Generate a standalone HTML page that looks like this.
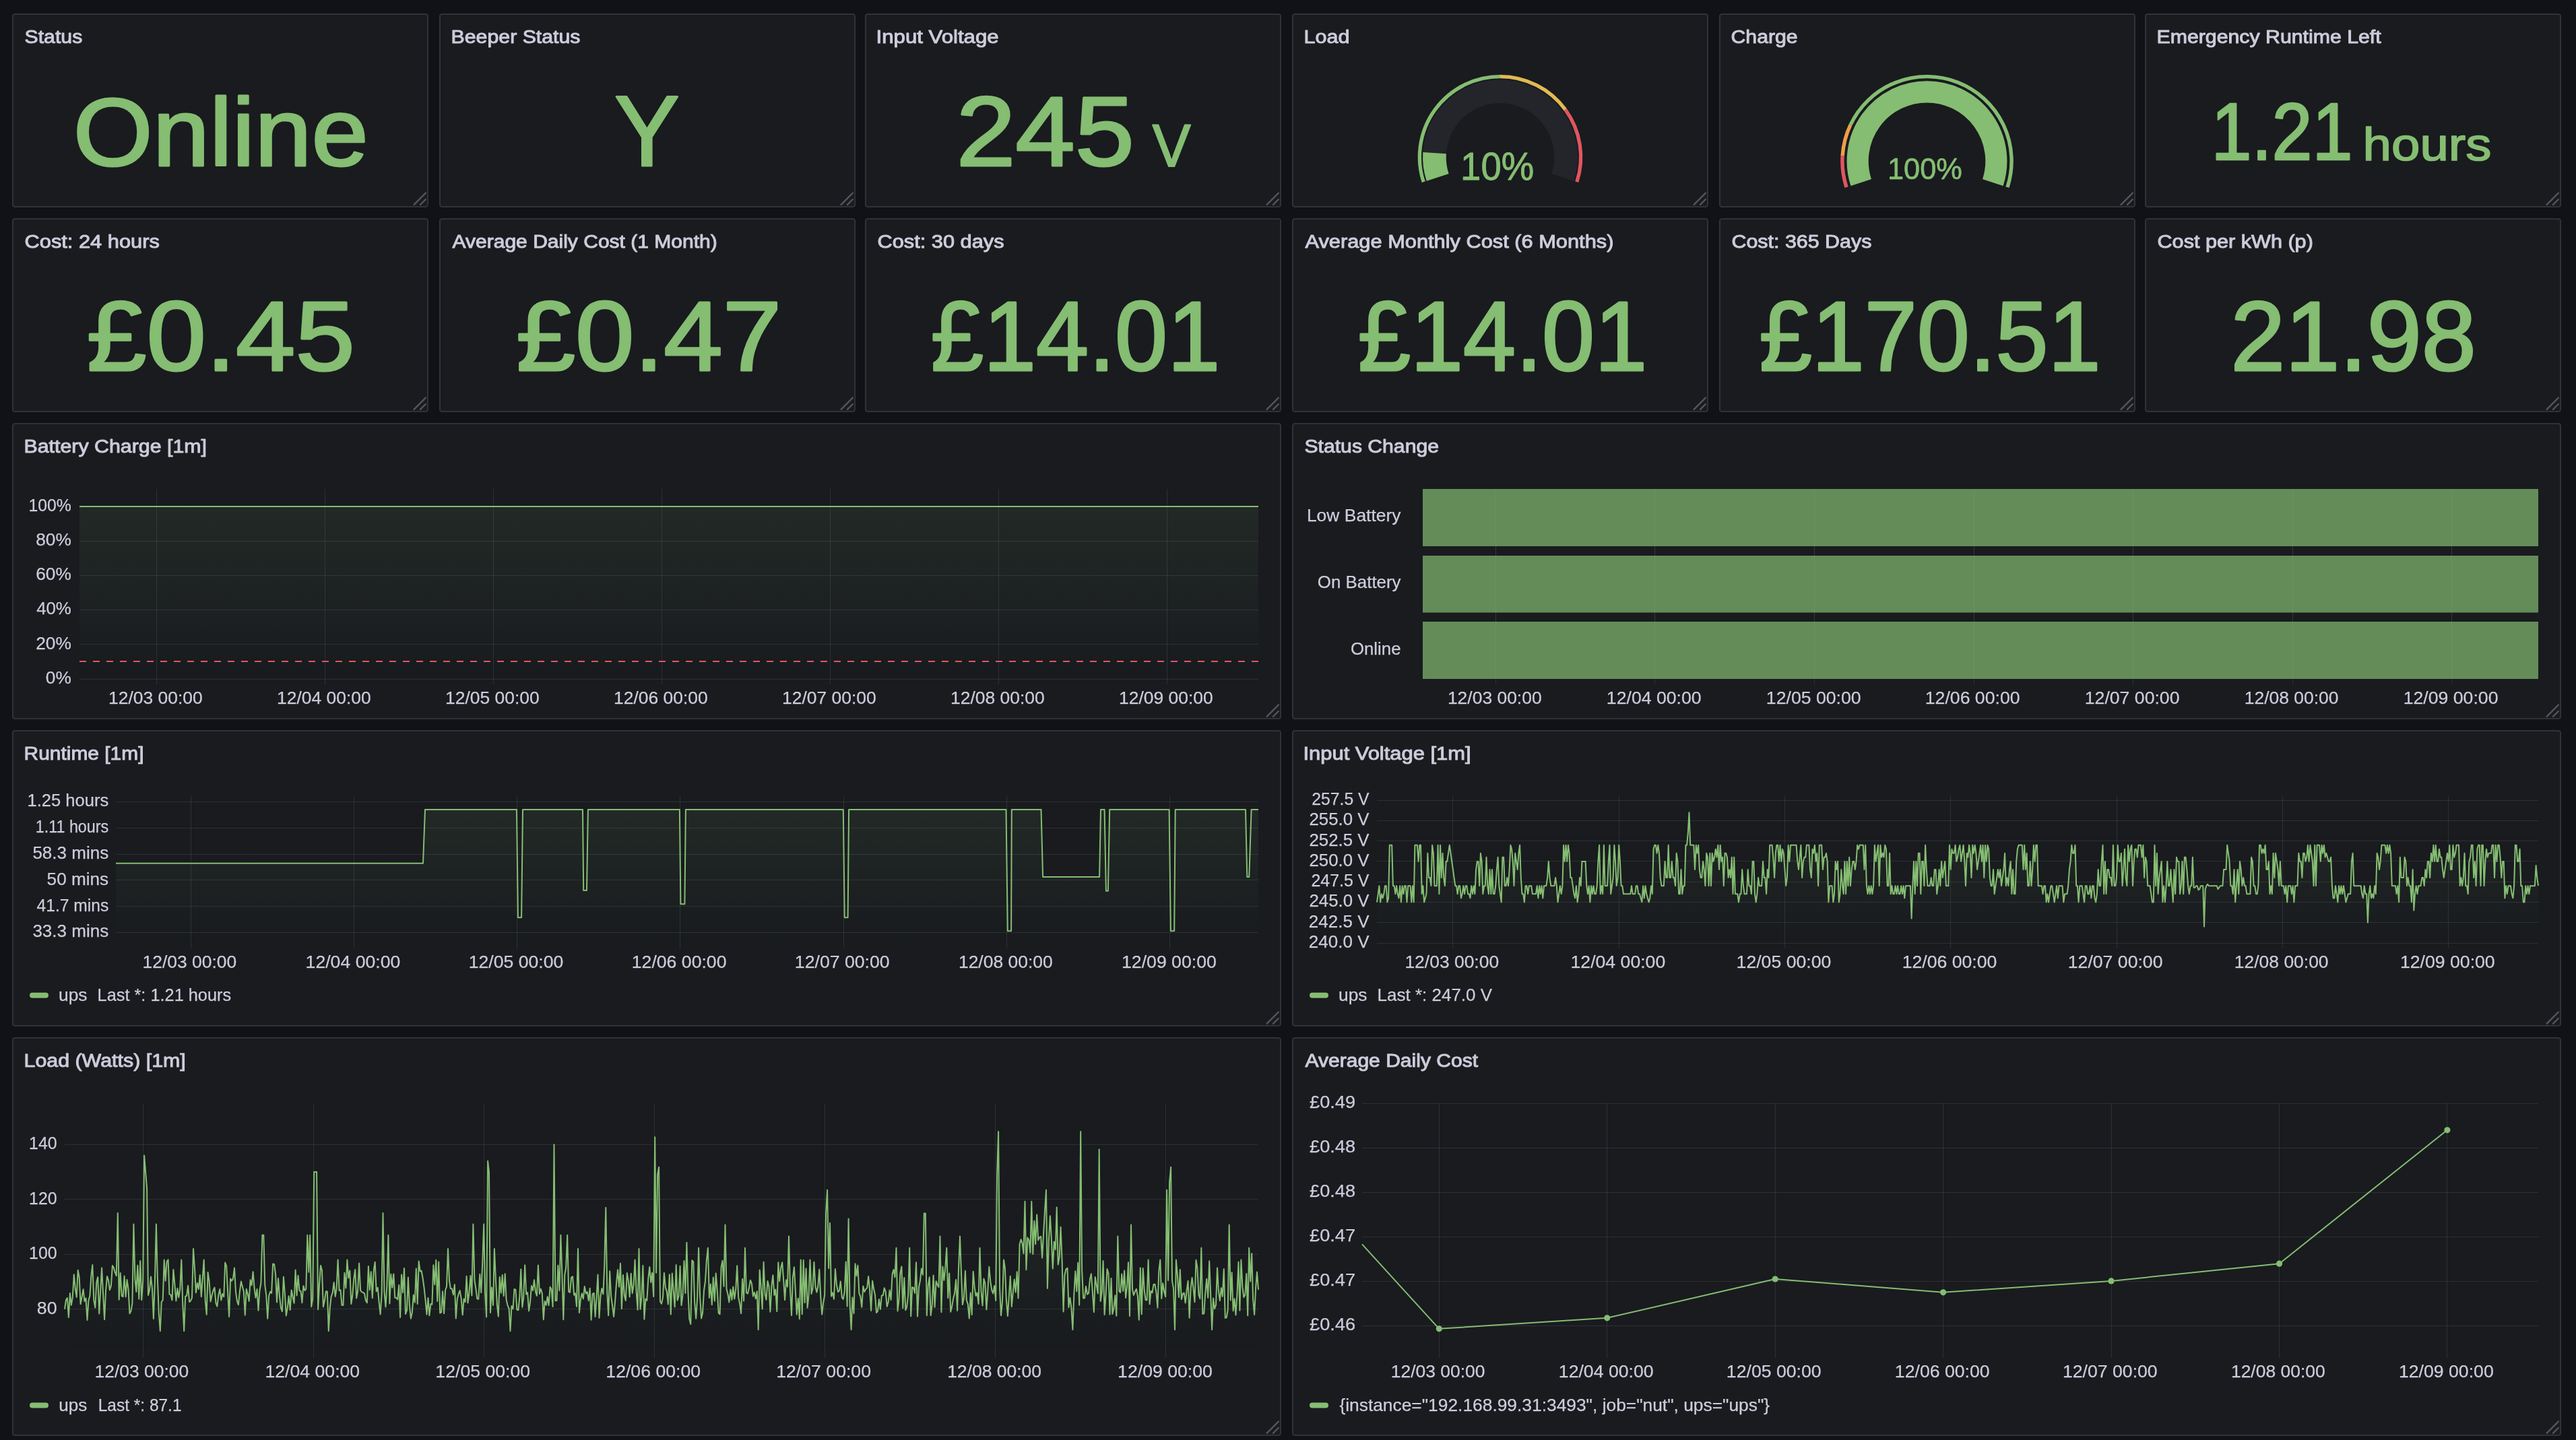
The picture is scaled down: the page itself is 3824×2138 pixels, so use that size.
<!DOCTYPE html><html lang="en"><head><meta charset="utf-8"><title>UPS Dashboard</title><style>
html,body{margin:0;padding:0}
html{background:#111217}
body{width:3824px;height:2138px;background:#111217;position:relative;font-family:"Liberation Sans", sans-serif;color:#ccccdb}
.panel{position:absolute;box-sizing:border-box;background:#191b1f;border-radius:4px;overflow:hidden}
.panel::after{content:"";position:absolute;inset:0;border:2px solid #313238;border-radius:4px;pointer-events:none}
.panel svg{position:absolute;left:0;top:0;display:block;will-change:transform}
svg text{font-family:"Liberation Sans", sans-serif;paint-order:stroke fill}
</style></head><body><main>
<section class="panel " style="left:18px;top:20px;width:618px;height:288px"><svg width="618" height="288" viewBox="18 20 618 288"><text x="36.51" y="63.90" font-size="28.2" fill="#ccccdb" stroke="#ccccdb" stroke-width="1.0" stroke-linejoin="round" textLength="85.79" lengthAdjust="spacingAndGlyphs">Status</text><text x="108.79" y="246.40" font-size="142.5" fill="#85bd72" stroke="#85bd72" stroke-width="3.2" stroke-linejoin="round" textLength="437.99" lengthAdjust="spacingAndGlyphs">Online</text><path d="M614.6 303.8L631.8 286.6M624.0 303.8L631.8 296.0" stroke="#53555b" stroke-width="2.4" stroke-linecap="round" fill="none"/></svg></section>
<section class="panel " style="left:652px;top:20px;width:618px;height:288px"><svg width="618" height="288" viewBox="652 20 618 288"><text x="669.55" y="63.90" font-size="28.2" fill="#ccccdb" stroke="#ccccdb" stroke-width="1.0" stroke-linejoin="round" textLength="191.95" lengthAdjust="spacingAndGlyphs">Beeper Status</text><text x="911.91" y="246.40" font-size="147.5" fill="#85bd72" stroke="#85bd72" stroke-width="3.2" stroke-linejoin="round" textLength="96.74" lengthAdjust="spacingAndGlyphs">Y</text><path d="M1248.6 303.8L1265.8 286.6M1258.0 303.8L1265.8 296.0" stroke="#53555b" stroke-width="2.4" stroke-linecap="round" fill="none"/></svg></section>
<section class="panel " style="left:1284px;top:20px;width:618px;height:288px"><svg width="618" height="288" viewBox="1284 20 618 288"><text x="1300.56" y="63.90" font-size="28.2" fill="#ccccdb" stroke="#ccccdb" stroke-width="1.0" stroke-linejoin="round" textLength="182.10" lengthAdjust="spacingAndGlyphs">Input Voltage</text><text x="1419.46" y="246.40" font-size="147" fill="#85bd72" stroke="#85bd72" stroke-width="3.2" stroke-linejoin="round" textLength="264.34" lengthAdjust="spacingAndGlyphs">245</text><text x="1710.77" y="247.00" font-size="89" fill="#85bd72" stroke="#85bd72" stroke-width="2.0" stroke-linejoin="round" textLength="56.84" lengthAdjust="spacingAndGlyphs">V</text><path d="M1880.6 303.8L1897.8 286.6M1890.0 303.8L1897.8 296.0" stroke="#53555b" stroke-width="2.4" stroke-linecap="round" fill="none"/></svg></section>
<section class="panel " style="left:1918px;top:20px;width:618px;height:288px"><svg width="618" height="288" viewBox="1918 20 618 288"><text x="1935.52" y="63.90" font-size="28.2" fill="#ccccdb" stroke="#ccccdb" stroke-width="1.0" stroke-linejoin="round" textLength="67.95" lengthAdjust="spacingAndGlyphs">Load</text><path d="M2134.18 263.36A97.60 97.60 0 1 1 2319.82 263.36" stroke="#23252a" stroke-width="34.6" fill="none"/><path d="M2134.18 263.36A97.60 97.60 0 0 1 2129.59 227.07" stroke="#85bd72" stroke-width="34.6" fill="none"/><path d="M2113.21 270.17A119.65 119.65 0 0 1 2227.00 113.55" stroke="#85bd72" stroke-width="5.3" fill="none"/><path d="M2227.00 113.55A119.65 119.65 0 0 1 2323.80 162.87" stroke="#e2ba53" stroke-width="5.3" fill="none"/><path d="M2323.80 162.87A119.65 119.65 0 0 1 2340.79 270.17" stroke="#e05660" stroke-width="5.3" fill="none"/><text x="2168.12" y="267.35" font-size="57.5" fill="#85bd72" stroke="#85bd72" stroke-width="0.9" stroke-linejoin="round" textLength="109.06" lengthAdjust="spacingAndGlyphs">10%</text><path d="M2514.6 303.8L2531.8 286.6M2524.0 303.8L2531.8 296.0" stroke="#53555b" stroke-width="2.4" stroke-linecap="round" fill="none"/></svg></section>
<section class="panel " style="left:2552px;top:20px;width:618px;height:288px"><svg width="618" height="288" viewBox="2552 20 618 288"><text x="2569.55" y="63.90" font-size="28.2" fill="#ccccdb" stroke="#ccccdb" stroke-width="1.0" stroke-linejoin="round" textLength="99.08" lengthAdjust="spacingAndGlyphs">Charge</text><path d="M2762.68 270.98A102.85 102.85 0 1 1 2958.32 270.98" stroke="#23252a" stroke-width="32.1" fill="none"/><path d="M2762.68 270.98A102.85 102.85 0 1 1 2958.32 270.98" stroke="#85bd72" stroke-width="32.1" fill="none"/><path d="M2741.05 278.01A125.60 125.60 0 0 1 2735.15 231.31" stroke="#e05660" stroke-width="5.4" fill="none"/><path d="M2735.15 231.31A125.60 125.60 0 0 1 2746.85 185.72" stroke="#f19d49" stroke-width="5.4" fill="none"/><path d="M2746.85 185.72A125.60 125.60 0 0 1 2979.95 278.01" stroke="#85bd72" stroke-width="5.4" fill="none"/><text x="2801.97" y="266.05" font-size="44.5" fill="#85bd72" stroke="#85bd72" stroke-width="0.7" stroke-linejoin="round" textLength="110.98" lengthAdjust="spacingAndGlyphs">100%</text><path d="M3148.6 303.8L3165.8 286.6M3158.0 303.8L3165.8 296.0" stroke="#53555b" stroke-width="2.4" stroke-linecap="round" fill="none"/></svg></section>
<section class="panel " style="left:3184px;top:20px;width:618px;height:288px"><svg width="618" height="288" viewBox="3184 20 618 288"><text x="3201.51" y="63.90" font-size="28.2" fill="#ccccdb" stroke="#ccccdb" stroke-width="1.0" stroke-linejoin="round" textLength="333.20" lengthAdjust="spacingAndGlyphs">Emergency Runtime Left</text><text x="3282.48" y="237.05" font-size="120" fill="#85bd72" stroke="#85bd72" stroke-width="2.7" stroke-linejoin="round" textLength="210.00" lengthAdjust="spacingAndGlyphs">1.21</text><text x="3507.61" y="237.55" font-size="68.7" fill="#85bd72" stroke="#85bd72" stroke-width="1.7" stroke-linejoin="round" textLength="190.81" lengthAdjust="spacingAndGlyphs">hours</text><path d="M3780.6 303.8L3797.8 286.6M3790.0 303.8L3797.8 296.0" stroke="#53555b" stroke-width="2.4" stroke-linecap="round" fill="none"/></svg></section>
<section class="panel " style="left:18px;top:324px;width:618px;height:288px"><svg width="618" height="288" viewBox="18 324 618 288"><text x="36.50" y="367.90" font-size="28.2" fill="#ccccdb" stroke="#ccccdb" stroke-width="1.0" stroke-linejoin="round" textLength="200.40" lengthAdjust="spacingAndGlyphs">Cost: 24 hours</text><text x="129.05" y="550.20" font-size="147" fill="#85bd72" stroke="#85bd72" stroke-width="3.2" stroke-linejoin="round" textLength="397.82" lengthAdjust="spacingAndGlyphs">£0.45</text><path d="M614.6 607.8L631.8 590.6M624.0 607.8L631.8 600.0" stroke="#53555b" stroke-width="2.4" stroke-linecap="round" fill="none"/></svg></section>
<section class="panel " style="left:652px;top:324px;width:618px;height:288px"><svg width="618" height="288" viewBox="652 324 618 288"><text x="671.50" y="367.90" font-size="28.2" fill="#ccccdb" stroke="#ccccdb" stroke-width="1.0" stroke-linejoin="round" textLength="393.30" lengthAdjust="spacingAndGlyphs">Average Daily Cost (1 Month)</text><text x="766.63" y="550.20" font-size="147" fill="#85bd72" stroke="#85bd72" stroke-width="3.2" stroke-linejoin="round" textLength="393.70" lengthAdjust="spacingAndGlyphs">£0.47</text><path d="M1248.6 607.8L1265.8 590.6M1258.0 607.8L1265.8 600.0" stroke="#53555b" stroke-width="2.4" stroke-linecap="round" fill="none"/></svg></section>
<section class="panel " style="left:1284px;top:324px;width:618px;height:288px"><svg width="618" height="288" viewBox="1284 324 618 288"><text x="1302.51" y="367.90" font-size="28.2" fill="#ccccdb" stroke="#ccccdb" stroke-width="1.0" stroke-linejoin="round" textLength="188.08" lengthAdjust="spacingAndGlyphs">Cost: 30 days</text><text x="1382.08" y="550.20" font-size="147" fill="#85bd72" stroke="#85bd72" stroke-width="3.2" stroke-linejoin="round" textLength="429.10" lengthAdjust="spacingAndGlyphs">£14.01</text><path d="M1880.6 607.8L1897.8 590.6M1890.0 607.8L1897.8 600.0" stroke="#53555b" stroke-width="2.4" stroke-linecap="round" fill="none"/></svg></section>
<section class="panel " style="left:1918px;top:324px;width:618px;height:288px"><svg width="618" height="288" viewBox="1918 324 618 288"><text x="1937.50" y="367.90" font-size="28.2" fill="#ccccdb" stroke="#ccccdb" stroke-width="1.0" stroke-linejoin="round" textLength="457.90" lengthAdjust="spacingAndGlyphs">Average Monthly Cost (6 Months)</text><text x="2016.08" y="550.20" font-size="147" fill="#85bd72" stroke="#85bd72" stroke-width="3.2" stroke-linejoin="round" textLength="429.10" lengthAdjust="spacingAndGlyphs">£14.01</text><path d="M2514.6 607.8L2531.8 590.6M2524.0 607.8L2531.8 600.0" stroke="#53555b" stroke-width="2.4" stroke-linecap="round" fill="none"/></svg></section>
<section class="panel " style="left:2552px;top:324px;width:618px;height:288px"><svg width="618" height="288" viewBox="2552 324 618 288"><text x="2570.51" y="367.90" font-size="28.2" fill="#ccccdb" stroke="#ccccdb" stroke-width="1.0" stroke-linejoin="round" textLength="207.89" lengthAdjust="spacingAndGlyphs">Cost: 365 Days</text><text x="2611.69" y="550.20" font-size="147" fill="#85bd72" stroke="#85bd72" stroke-width="3.2" stroke-linejoin="round" textLength="506.88" lengthAdjust="spacingAndGlyphs">£170.51</text><path d="M3148.6 607.8L3165.8 590.6M3158.0 607.8L3165.8 600.0" stroke="#53555b" stroke-width="2.4" stroke-linecap="round" fill="none"/></svg></section>
<section class="panel " style="left:3184px;top:324px;width:618px;height:288px"><svg width="618" height="288" viewBox="3184 324 618 288"><text x="3202.50" y="367.90" font-size="28.2" fill="#ccccdb" stroke="#ccccdb" stroke-width="1.0" stroke-linejoin="round" textLength="231.36" lengthAdjust="spacingAndGlyphs">Cost per kWh (p)</text><text x="3311.28" y="550.20" font-size="147" fill="#85bd72" stroke="#85bd72" stroke-width="3.2" stroke-linejoin="round" textLength="364.61" lengthAdjust="spacingAndGlyphs">21.98</text><path d="M3780.6 607.8L3797.8 590.6M3790.0 607.8L3797.8 600.0" stroke="#53555b" stroke-width="2.4" stroke-linecap="round" fill="none"/></svg></section>
<section class="panel " style="left:18px;top:628px;width:1884px;height:440px"><svg width="1884" height="440" viewBox="18 628 1884 440"><text x="35.47" y="671.90" font-size="28.2" fill="#ccccdb" stroke="#ccccdb" stroke-width="1.0" stroke-linejoin="round" textLength="271.56" lengthAdjust="spacingAndGlyphs">Battery Charge [1m]</text><defs><linearGradient id="gB" gradientUnits="userSpaceOnUse" x1="0" y1="726" x2="0" y2="1008"><stop offset="0" stop-color="#85bd72" stop-opacity="0.1"/><stop offset="1" stop-color="#85bd72" stop-opacity="0"/></linearGradient></defs><rect x="118" y="752" width="1750" height="256" fill="url(#gB)"/><rect x="232" y="726" width="1" height="290" fill="rgba(240,250,255,0.09)"/><rect x="482" y="726" width="1" height="290" fill="rgba(240,250,255,0.09)"/><rect x="732" y="726" width="1" height="290" fill="rgba(240,250,255,0.09)"/><rect x="982" y="726" width="1" height="290" fill="rgba(240,250,255,0.09)"/><rect x="1232" y="726" width="1" height="290" fill="rgba(240,250,255,0.09)"/><rect x="1482" y="726" width="1" height="290" fill="rgba(240,250,255,0.09)"/><rect x="1732" y="726" width="1" height="290" fill="rgba(240,250,255,0.09)"/><rect x="118" y="752" width="1750" height="1" fill="rgba(240,250,255,0.09)"/><rect x="118" y="803" width="1750" height="1" fill="rgba(240,250,255,0.09)"/><rect x="118" y="854" width="1750" height="1" fill="rgba(240,250,255,0.09)"/><rect x="118" y="905" width="1750" height="1" fill="rgba(240,250,255,0.09)"/><rect x="118" y="956" width="1750" height="1" fill="rgba(240,250,255,0.09)"/><rect x="118" y="1008" width="1750" height="1" fill="rgba(240,250,255,0.09)"/><rect x="118" y="751" width="1750" height="2" fill="#85bd72"/><path d="M118 982H1868" stroke="#e05660" stroke-width="2" stroke-dasharray="10 10" fill="none"/><text x="42.44" y="758.88" font-size="25" fill="#ccccdb" stroke="#ccccdb" stroke-width="0.25" stroke-linejoin="round" textLength="63.39" lengthAdjust="spacingAndGlyphs">100%</text><text x="53.24" y="810.08" font-size="25" fill="#ccccdb" stroke="#ccccdb" stroke-width="0.25" stroke-linejoin="round" textLength="52.62" lengthAdjust="spacingAndGlyphs">80%</text><text x="53.20" y="861.27" font-size="25" fill="#ccccdb" stroke="#ccccdb" stroke-width="0.25" stroke-linejoin="round" textLength="52.66" lengthAdjust="spacingAndGlyphs">60%</text><text x="54.15" y="912.48" font-size="25" fill="#ccccdb" stroke="#ccccdb" stroke-width="0.25" stroke-linejoin="round" textLength="51.71" lengthAdjust="spacingAndGlyphs">40%</text><text x="53.18" y="963.67" font-size="25" fill="#ccccdb" stroke="#ccccdb" stroke-width="0.25" stroke-linejoin="round" textLength="52.68" lengthAdjust="spacingAndGlyphs">20%</text><text x="67.79" y="1014.88" font-size="25" fill="#ccccdb" stroke="#ccccdb" stroke-width="0.25" stroke-linejoin="round" textLength="38.00" lengthAdjust="spacingAndGlyphs">0%</text><text x="161.01" y="1044.88" font-size="25" fill="#ccccdb" stroke="#ccccdb" stroke-width="0.25" stroke-linejoin="round" textLength="139.74" lengthAdjust="spacingAndGlyphs">12/03 00:00</text><text x="411.01" y="1044.88" font-size="25" fill="#ccccdb" stroke="#ccccdb" stroke-width="0.25" stroke-linejoin="round" textLength="139.74" lengthAdjust="spacingAndGlyphs">12/04 00:00</text><text x="661.01" y="1044.88" font-size="25" fill="#ccccdb" stroke="#ccccdb" stroke-width="0.25" stroke-linejoin="round" textLength="139.74" lengthAdjust="spacingAndGlyphs">12/05 00:00</text><text x="911.01" y="1044.88" font-size="25" fill="#ccccdb" stroke="#ccccdb" stroke-width="0.25" stroke-linejoin="round" textLength="139.74" lengthAdjust="spacingAndGlyphs">12/06 00:00</text><text x="1161.01" y="1044.88" font-size="25" fill="#ccccdb" stroke="#ccccdb" stroke-width="0.25" stroke-linejoin="round" textLength="139.74" lengthAdjust="spacingAndGlyphs">12/07 00:00</text><text x="1411.01" y="1044.88" font-size="25" fill="#ccccdb" stroke="#ccccdb" stroke-width="0.25" stroke-linejoin="round" textLength="139.74" lengthAdjust="spacingAndGlyphs">12/08 00:00</text><text x="1661.01" y="1044.88" font-size="25" fill="#ccccdb" stroke="#ccccdb" stroke-width="0.25" stroke-linejoin="round" textLength="139.74" lengthAdjust="spacingAndGlyphs">12/09 00:00</text><path d="M1880.6 1063.8L1897.8 1046.6M1890.0 1063.8L1897.8 1056.0" stroke="#53555b" stroke-width="2.4" stroke-linecap="round" fill="none"/></svg></section>
<section class="panel " style="left:1918px;top:628px;width:1884px;height:440px"><svg width="1884" height="440" viewBox="1918 628 1884 440"><text x="1936.50" y="671.90" font-size="28.2" fill="#ccccdb" stroke="#ccccdb" stroke-width="1.0" stroke-linejoin="round" textLength="199.44" lengthAdjust="spacingAndGlyphs">Status Change</text><rect x="2220" y="726" width="1" height="290" fill="rgba(240,250,255,0.09)"/><rect x="2456" y="726" width="1" height="290" fill="rgba(240,250,255,0.09)"/><rect x="2693" y="726" width="1" height="290" fill="rgba(240,250,255,0.09)"/><rect x="2930" y="726" width="1" height="290" fill="rgba(240,250,255,0.09)"/><rect x="3166" y="726" width="1" height="290" fill="rgba(240,250,255,0.09)"/><rect x="3403" y="726" width="1" height="290" fill="rgba(240,250,255,0.09)"/><rect x="3639" y="726" width="1" height="290" fill="rgba(240,250,255,0.09)"/><rect x="2112" y="726" width="1656" height="85" fill="#648c59"/><rect x="2112" y="825" width="1656" height="84.5" fill="#648c59"/><rect x="2112" y="923" width="1656" height="85" fill="#648c59"/><rect x="2220" y="726" width="1" height="282" fill="rgba(240,250,255,0.05)"/><rect x="2456" y="726" width="1" height="282" fill="rgba(240,250,255,0.05)"/><rect x="2693" y="726" width="1" height="282" fill="rgba(240,250,255,0.05)"/><rect x="2930" y="726" width="1" height="282" fill="rgba(240,250,255,0.05)"/><rect x="3166" y="726" width="1" height="282" fill="rgba(240,250,255,0.05)"/><rect x="3403" y="726" width="1" height="282" fill="rgba(240,250,255,0.05)"/><rect x="3639" y="726" width="1" height="282" fill="rgba(240,250,255,0.05)"/><text x="1939.92" y="774.08" font-size="25" fill="#ccccdb" stroke="#ccccdb" stroke-width="0.25" stroke-linejoin="round" textLength="139.60" lengthAdjust="spacingAndGlyphs">Low Battery</text><text x="1955.87" y="873.08" font-size="25" fill="#ccccdb" stroke="#ccccdb" stroke-width="0.25" stroke-linejoin="round" textLength="123.68" lengthAdjust="spacingAndGlyphs">On Battery</text><text x="2004.99" y="972.08" font-size="25" fill="#ccccdb" stroke="#ccccdb" stroke-width="0.25" stroke-linejoin="round" textLength="74.52" lengthAdjust="spacingAndGlyphs">Online</text><text x="2148.92" y="1044.88" font-size="25" fill="#ccccdb" stroke="#ccccdb" stroke-width="0.25" stroke-linejoin="round" textLength="139.73" lengthAdjust="spacingAndGlyphs">12/03 00:00</text><text x="2384.86" y="1044.88" font-size="25" fill="#ccccdb" stroke="#ccccdb" stroke-width="0.25" stroke-linejoin="round" textLength="140.76" lengthAdjust="spacingAndGlyphs">12/04 00:00</text><text x="2621.85" y="1044.88" font-size="25" fill="#ccccdb" stroke="#ccccdb" stroke-width="0.25" stroke-linejoin="round" textLength="140.77" lengthAdjust="spacingAndGlyphs">12/05 00:00</text><text x="2857.80" y="1044.88" font-size="25" fill="#ccccdb" stroke="#ccccdb" stroke-width="0.25" stroke-linejoin="round" textLength="140.76" lengthAdjust="spacingAndGlyphs">12/06 00:00</text><text x="3094.76" y="1044.88" font-size="25" fill="#ccccdb" stroke="#ccccdb" stroke-width="0.25" stroke-linejoin="round" textLength="140.76" lengthAdjust="spacingAndGlyphs">12/07 00:00</text><text x="3331.75" y="1044.88" font-size="25" fill="#ccccdb" stroke="#ccccdb" stroke-width="0.25" stroke-linejoin="round" textLength="139.76" lengthAdjust="spacingAndGlyphs">12/08 00:00</text><text x="3567.72" y="1044.88" font-size="25" fill="#ccccdb" stroke="#ccccdb" stroke-width="0.25" stroke-linejoin="round" textLength="140.74" lengthAdjust="spacingAndGlyphs">12/09 00:00</text><path d="M3780.6 1063.8L3797.8 1046.6M3790.0 1063.8L3797.8 1056.0" stroke="#53555b" stroke-width="2.4" stroke-linecap="round" fill="none"/></svg></section>
<section class="panel " style="left:18px;top:1084px;width:1884px;height:440px"><svg width="1884" height="440" viewBox="18 1084 1884 440"><text x="35.54" y="1127.90" font-size="28.2" fill="#ccccdb" stroke="#ccccdb" stroke-width="1.0" stroke-linejoin="round" textLength="177.98" lengthAdjust="spacingAndGlyphs">Runtime [1m]</text><defs><linearGradient id="gR" gradientUnits="userSpaceOnUse" x1="0" y1="1182" x2="0" y2="1400"><stop offset="0" stop-color="#85bd72" stop-opacity="0.1"/><stop offset="1" stop-color="#85bd72" stop-opacity="0"/></linearGradient></defs><rect x="283" y="1182" width="1" height="226" fill="rgba(240,250,255,0.09)"/><rect x="525" y="1182" width="1" height="226" fill="rgba(240,250,255,0.09)"/><rect x="767" y="1182" width="1" height="226" fill="rgba(240,250,255,0.09)"/><rect x="1009" y="1182" width="1" height="226" fill="rgba(240,250,255,0.09)"/><rect x="1252" y="1182" width="1" height="226" fill="rgba(240,250,255,0.09)"/><rect x="1494" y="1182" width="1" height="226" fill="rgba(240,250,255,0.09)"/><rect x="1736" y="1182" width="1" height="226" fill="rgba(240,250,255,0.09)"/><rect x="172" y="1190" width="1696" height="1" fill="rgba(240,250,255,0.09)"/><rect x="172" y="1229" width="1696" height="1" fill="rgba(240,250,255,0.09)"/><rect x="172" y="1268" width="1696" height="1" fill="rgba(240,250,255,0.09)"/><rect x="172" y="1306" width="1696" height="1" fill="rgba(240,250,255,0.09)"/><rect x="172" y="1345" width="1696" height="1" fill="rgba(240,250,255,0.09)"/><rect x="172" y="1384" width="1696" height="1" fill="rgba(240,250,255,0.09)"/><path d="M172.0 1281.7L628.0 1281.7L631.0 1202.0L767.0 1202.0L768.9 1362.2L774.1 1362.2L776.0 1202.0L865.0 1202.0L866.2 1322.0L871.0 1322.0L872.9 1202.0L1008.9 1202.0L1010.4 1342.3L1016.4 1342.3L1017.9 1202.0L1251.8 1202.0L1253.7 1362.2L1258.6 1362.2L1260.1 1202.0L1493.5 1202.0L1495.8 1382.2L1501.1 1382.2L1501.8 1202.0L1545.5 1202.0L1548.1 1302.0L1632.1 1302.0L1634.0 1202.0L1639.6 1202.0L1641.9 1322.7L1644.9 1322.7L1647.2 1202.0L1735.6 1202.0L1737.9 1382.2L1743.2 1382.2L1744.7 1202.0L1849.0 1202.0L1851.3 1302.0L1854.3 1302.0L1857.6 1202.0L1868.0 1202.0L1868.0 1400L172.0 1400Z" fill="url(#gR)"/><path d="M172.0 1281.7L628.0 1281.7L631.0 1202.0L767.0 1202.0L768.9 1362.2L774.1 1362.2L776.0 1202.0L865.0 1202.0L866.2 1322.0L871.0 1322.0L872.9 1202.0L1008.9 1202.0L1010.4 1342.3L1016.4 1342.3L1017.9 1202.0L1251.8 1202.0L1253.7 1362.2L1258.6 1362.2L1260.1 1202.0L1493.5 1202.0L1495.8 1382.2L1501.1 1382.2L1501.8 1202.0L1545.5 1202.0L1548.1 1302.0L1632.1 1302.0L1634.0 1202.0L1639.6 1202.0L1641.9 1322.7L1644.9 1322.7L1647.2 1202.0L1735.6 1202.0L1737.9 1382.2L1743.2 1382.2L1744.7 1202.0L1849.0 1202.0L1851.3 1302.0L1854.3 1302.0L1857.6 1202.0L1868.0 1202.0" fill="none" stroke="#85bd72" stroke-width="2" stroke-linejoin="round"/><text x="40.54" y="1197.28" font-size="25" fill="#ccccdb" stroke="#ccccdb" stroke-width="0.25" stroke-linejoin="round" textLength="120.71" lengthAdjust="spacingAndGlyphs">1.25 hours</text><text x="52.81" y="1236.08" font-size="25" fill="#ccccdb" stroke="#ccccdb" stroke-width="0.25" stroke-linejoin="round" textLength="108.39" lengthAdjust="spacingAndGlyphs">1.11 hours</text><text x="48.40" y="1274.97" font-size="25" fill="#ccccdb" stroke="#ccccdb" stroke-width="0.25" stroke-linejoin="round" textLength="112.83" lengthAdjust="spacingAndGlyphs">58.3 mins</text><text x="69.64" y="1313.78" font-size="25" fill="#ccccdb" stroke="#ccccdb" stroke-width="0.25" stroke-linejoin="round" textLength="91.57" lengthAdjust="spacingAndGlyphs">50 mins</text><text x="54.61" y="1352.67" font-size="25" fill="#ccccdb" stroke="#ccccdb" stroke-width="0.25" stroke-linejoin="round" textLength="106.60" lengthAdjust="spacingAndGlyphs">41.7 mins</text><text x="48.40" y="1391.47" font-size="25" fill="#ccccdb" stroke="#ccccdb" stroke-width="0.25" stroke-linejoin="round" textLength="112.83" lengthAdjust="spacingAndGlyphs">33.3 mins</text><text x="211.51" y="1436.88" font-size="25" fill="#ccccdb" stroke="#ccccdb" stroke-width="0.25" stroke-linejoin="round" textLength="139.73" lengthAdjust="spacingAndGlyphs">12/03 00:00</text><text x="453.59" y="1436.88" font-size="25" fill="#ccccdb" stroke="#ccccdb" stroke-width="0.25" stroke-linejoin="round" textLength="140.75" lengthAdjust="spacingAndGlyphs">12/04 00:00</text><text x="695.66" y="1436.88" font-size="25" fill="#ccccdb" stroke="#ccccdb" stroke-width="0.25" stroke-linejoin="round" textLength="140.77" lengthAdjust="spacingAndGlyphs">12/05 00:00</text><text x="937.76" y="1436.88" font-size="25" fill="#ccccdb" stroke="#ccccdb" stroke-width="0.25" stroke-linejoin="round" textLength="140.76" lengthAdjust="spacingAndGlyphs">12/06 00:00</text><text x="1179.86" y="1436.88" font-size="25" fill="#ccccdb" stroke="#ccccdb" stroke-width="0.25" stroke-linejoin="round" textLength="140.76" lengthAdjust="spacingAndGlyphs">12/07 00:00</text><text x="1422.96" y="1436.88" font-size="25" fill="#ccccdb" stroke="#ccccdb" stroke-width="0.25" stroke-linejoin="round" textLength="139.74" lengthAdjust="spacingAndGlyphs">12/08 00:00</text><text x="1665.04" y="1436.88" font-size="25" fill="#ccccdb" stroke="#ccccdb" stroke-width="0.25" stroke-linejoin="round" textLength="140.76" lengthAdjust="spacingAndGlyphs">12/09 00:00</text><rect x="44" y="1473.8" width="28" height="8" rx="4" fill="#85bd72"/><text x="87.09" y="1485.88" font-size="25" fill="#ccccdb" stroke="#ccccdb" stroke-width="0.25" stroke-linejoin="round" textLength="42.47" lengthAdjust="spacingAndGlyphs">ups</text><text x="144.62" y="1485.88" font-size="25" fill="#ccccdb" stroke="#ccccdb" stroke-width="0.25" stroke-linejoin="round" textLength="198.49" lengthAdjust="spacingAndGlyphs">Last *: 1.21 hours</text><path d="M1880.6 1519.8L1897.8 1502.6M1890.0 1519.8L1897.8 1512.0" stroke="#53555b" stroke-width="2.4" stroke-linecap="round" fill="none"/></svg></section>
<section class="panel " style="left:1918px;top:1084px;width:1884px;height:440px"><svg width="1884" height="440" viewBox="1918 1084 1884 440"><text x="1934.53" y="1127.90" font-size="28.2" fill="#ccccdb" stroke="#ccccdb" stroke-width="1.0" stroke-linejoin="round" textLength="248.98" lengthAdjust="spacingAndGlyphs">Input Voltage [1m]</text><defs><linearGradient id="gV" gradientUnits="userSpaceOnUse" x1="0" y1="1182" x2="0" y2="1400"><stop offset="0" stop-color="#85bd72" stop-opacity="0.1"/><stop offset="1" stop-color="#85bd72" stop-opacity="0"/></linearGradient></defs><rect x="2156" y="1182" width="1" height="226" fill="rgba(240,250,255,0.09)"/><rect x="2403" y="1182" width="1" height="226" fill="rgba(240,250,255,0.09)"/><rect x="2649" y="1182" width="1" height="226" fill="rgba(240,250,255,0.09)"/><rect x="2895" y="1182" width="1" height="226" fill="rgba(240,250,255,0.09)"/><rect x="3142" y="1182" width="1" height="226" fill="rgba(240,250,255,0.09)"/><rect x="3388" y="1182" width="1" height="226" fill="rgba(240,250,255,0.09)"/><rect x="3634" y="1182" width="1" height="226" fill="rgba(240,250,255,0.09)"/><rect x="2044" y="1188" width="1724" height="1" fill="rgba(240,250,255,0.09)"/><rect x="2044" y="1218" width="1724" height="1" fill="rgba(240,250,255,0.09)"/><rect x="2044" y="1248" width="1724" height="1" fill="rgba(240,250,255,0.09)"/><rect x="2044" y="1278" width="1724" height="1" fill="rgba(240,250,255,0.09)"/><rect x="2044" y="1309" width="1724" height="1" fill="rgba(240,250,255,0.09)"/><rect x="2044" y="1339" width="1724" height="1" fill="rgba(240,250,255,0.09)"/><rect x="2044" y="1369" width="1724" height="1" fill="rgba(240,250,255,0.09)"/><rect x="2044" y="1400" width="1724" height="1" fill="rgba(240,250,255,0.09)"/><path d="M2044.0 1339.5L2045.7 1327.3L2047.4 1315.2L2049.1 1339.5L2050.8 1327.3L2052.6 1333.4L2054.3 1327.3L2056.0 1315.2L2057.7 1315.2L2059.4 1339.5L2061.1 1333.4L2062.8 1254.7L2064.5 1254.7L2066.2 1254.7L2067.9 1315.2L2069.7 1315.2L2071.4 1327.3L2073.1 1315.2L2074.8 1327.3L2076.5 1333.4L2078.2 1315.2L2079.9 1339.5L2081.6 1315.2L2083.3 1327.3L2085.0 1315.2L2086.8 1315.2L2088.5 1339.5L2090.2 1315.2L2091.9 1315.2L2093.6 1315.2L2095.3 1339.5L2097.0 1315.2L2098.7 1339.5L2100.4 1254.7L2102.2 1254.7L2103.9 1254.7L2105.6 1278.9L2107.3 1254.7L2109.0 1254.7L2110.7 1327.3L2112.4 1315.2L2114.1 1339.5L2115.8 1333.4L2117.5 1327.3L2119.3 1266.8L2121.0 1303.1L2122.7 1303.1L2124.4 1315.2L2126.1 1254.7L2127.8 1266.8L2129.5 1315.2L2131.2 1315.2L2132.9 1315.2L2134.6 1254.7L2136.4 1327.3L2138.1 1254.7L2139.8 1303.1L2141.5 1266.8L2143.2 1303.1L2144.9 1315.2L2146.6 1278.9L2148.3 1278.9L2150.0 1266.8L2151.8 1254.7L2153.5 1266.8L2155.2 1278.9L2156.9 1291.0L2158.6 1303.1L2160.3 1315.2L2162.0 1315.2L2163.7 1327.3L2165.4 1315.2L2167.1 1315.2L2168.9 1333.4L2170.6 1327.3L2172.3 1315.2L2174.0 1327.3L2175.7 1315.2L2177.4 1315.2L2179.1 1327.3L2180.8 1327.3L2182.5 1333.4L2184.2 1315.2L2186.0 1327.3L2187.7 1315.2L2189.4 1327.3L2191.1 1291.0L2192.8 1278.9L2194.5 1278.9L2196.2 1315.2L2197.9 1266.8L2199.6 1278.9L2201.3 1327.3L2203.1 1315.2L2204.8 1315.2L2206.5 1272.8L2208.2 1315.2L2209.9 1327.3L2211.6 1291.0L2213.3 1327.3L2215.0 1291.0L2216.7 1327.3L2218.5 1327.3L2220.2 1315.2L2221.9 1291.0L2223.6 1272.8L2225.3 1315.2L2227.0 1327.3L2228.7 1339.5L2230.4 1272.8L2232.1 1272.8L2233.8 1315.2L2235.6 1315.2L2237.3 1303.1L2239.0 1315.2L2240.7 1291.0L2242.4 1254.7L2244.1 1260.7L2245.8 1278.9L2247.5 1315.2L2249.2 1266.8L2250.9 1278.9L2252.7 1291.0L2254.4 1266.8L2256.1 1254.7L2257.8 1303.1L2259.5 1327.3L2261.2 1327.3L2262.9 1339.5L2264.6 1315.2L2266.3 1315.2L2268.1 1327.3L2269.8 1315.2L2271.5 1315.2L2273.2 1315.2L2274.9 1327.3L2276.6 1327.3L2278.3 1327.3L2280.0 1327.3L2281.7 1315.2L2283.4 1333.4L2285.2 1315.2L2286.9 1327.3L2288.6 1315.2L2290.3 1333.4L2292.0 1315.2L2293.7 1315.2L2295.4 1315.2L2297.1 1303.1L2298.8 1278.9L2300.5 1303.1L2302.3 1315.2L2304.0 1315.2L2305.7 1315.2L2307.4 1315.2L2309.1 1303.1L2310.8 1315.2L2312.5 1339.5L2314.2 1327.3L2315.9 1315.2L2317.7 1327.3L2319.4 1315.2L2321.1 1254.7L2322.8 1278.9L2324.5 1254.7L2326.2 1278.9L2327.9 1254.7L2329.6 1266.8L2331.3 1303.1L2333.0 1303.1L2334.8 1315.2L2336.5 1327.3L2338.2 1333.4L2339.9 1315.2L2341.6 1339.5L2343.3 1327.3L2345.0 1303.1L2346.7 1315.2L2348.4 1278.9L2350.1 1278.9L2351.9 1278.9L2353.6 1278.9L2355.3 1315.2L2357.0 1327.3L2358.7 1315.2L2360.4 1339.5L2362.1 1315.2L2363.8 1327.3L2365.5 1315.2L2367.2 1327.3L2369.0 1327.3L2370.7 1315.2L2372.4 1278.9L2374.1 1254.7L2375.8 1327.3L2377.5 1315.2L2379.2 1327.3L2380.9 1254.7L2382.6 1315.2L2384.4 1315.2L2386.1 1315.2L2387.8 1278.9L2389.5 1254.7L2391.2 1327.3L2392.9 1315.2L2394.6 1303.1L2396.3 1254.7L2398.0 1278.9L2399.7 1315.2L2401.5 1303.1L2403.2 1254.7L2404.9 1278.9L2406.6 1315.2L2408.3 1315.2L2410.0 1327.3L2411.7 1327.3L2413.4 1327.3L2415.1 1327.3L2416.8 1327.3L2418.6 1327.3L2420.3 1327.3L2422.0 1315.2L2423.7 1327.3L2425.4 1327.3L2427.1 1327.3L2428.8 1315.2L2430.5 1315.2L2432.2 1327.3L2434.0 1327.3L2435.7 1333.4L2437.4 1339.5L2439.1 1315.2L2440.8 1333.4L2442.5 1315.2L2444.2 1327.3L2445.9 1333.4L2447.6 1339.5L2449.3 1333.4L2451.1 1315.2L2452.8 1327.3L2454.5 1260.7L2456.2 1254.7L2457.9 1254.7L2459.6 1266.8L2461.3 1254.7L2463.0 1266.8L2464.7 1303.1L2466.4 1315.2L2468.2 1315.2L2469.9 1315.2L2471.6 1278.9L2473.3 1303.1L2475.0 1303.1L2476.7 1254.7L2478.4 1303.1L2480.1 1303.1L2481.8 1278.9L2483.6 1303.1L2485.3 1303.1L2487.0 1315.2L2488.7 1266.8L2490.4 1278.9L2492.1 1327.3L2493.8 1327.3L2495.5 1291.0L2497.2 1327.3L2498.9 1315.2L2500.7 1315.2L2502.4 1254.7L2504.1 1254.7L2505.8 1236.5L2507.5 1206.2L2509.2 1254.7L2510.9 1254.7L2512.6 1254.7L2514.3 1254.7L2516.0 1291.0L2517.8 1254.7L2519.5 1266.8L2521.2 1254.7L2522.9 1291.0L2524.6 1303.1L2526.3 1303.1L2528.0 1278.9L2529.7 1291.0L2531.4 1315.2L2533.2 1266.8L2534.9 1272.8L2536.6 1315.2L2538.3 1266.8L2540.0 1315.2L2541.7 1266.8L2543.4 1278.9L2545.1 1272.8L2546.8 1260.7L2548.5 1272.8L2550.3 1254.7L2552.0 1291.0L2553.7 1254.7L2555.4 1278.9L2557.1 1272.8L2558.8 1315.2L2560.5 1266.8L2562.2 1266.8L2563.9 1272.8L2565.6 1303.1L2567.4 1291.0L2569.1 1303.1L2570.8 1272.8L2572.5 1327.3L2574.2 1272.8L2575.9 1327.3L2577.6 1327.3L2579.3 1327.3L2581.0 1339.5L2582.8 1327.3L2584.5 1327.3L2586.2 1291.0L2587.9 1315.2L2589.6 1327.3L2591.3 1327.3L2593.0 1327.3L2594.7 1291.0L2596.4 1315.2L2598.1 1315.2L2599.9 1327.3L2601.6 1278.9L2603.3 1278.9L2605.0 1327.3L2606.7 1339.5L2608.4 1327.3L2610.1 1303.1L2611.8 1315.2L2613.5 1315.2L2615.2 1315.2L2617.0 1278.9L2618.7 1303.1L2620.4 1303.1L2622.1 1327.3L2623.8 1291.0L2625.5 1303.1L2627.2 1254.7L2628.9 1254.7L2630.6 1254.7L2632.3 1272.8L2634.1 1303.1L2635.8 1266.8L2637.5 1254.7L2639.2 1254.7L2640.9 1278.9L2642.6 1254.7L2644.3 1278.9L2646.0 1260.7L2647.7 1266.8L2649.5 1291.0L2651.2 1315.2L2652.9 1303.1L2654.6 1254.7L2656.3 1278.9L2658.0 1254.7L2659.7 1254.7L2661.4 1254.7L2663.1 1254.7L2664.8 1254.7L2666.6 1254.7L2668.3 1278.9L2670.0 1291.0L2671.7 1272.8L2673.4 1254.7L2675.1 1303.1L2676.8 1278.9L2678.5 1272.8L2680.2 1272.8L2681.9 1254.7L2683.7 1254.7L2685.4 1254.7L2687.1 1291.0L2688.8 1303.1L2690.5 1260.7L2692.2 1266.8L2693.9 1254.7L2695.6 1278.9L2697.3 1266.8L2699.1 1315.2L2700.8 1254.7L2702.5 1254.7L2704.2 1254.7L2705.9 1291.0L2707.6 1272.8L2709.3 1272.8L2711.0 1266.8L2712.7 1278.9L2714.4 1339.5L2716.2 1315.2L2717.9 1315.2L2719.6 1315.2L2721.3 1339.5L2723.0 1327.3L2724.7 1278.9L2726.4 1291.0L2728.1 1278.9L2729.8 1339.5L2731.5 1327.3L2733.3 1291.0L2735.0 1315.2L2736.7 1327.3L2738.4 1278.9L2740.1 1327.3L2741.8 1278.9L2743.5 1315.2L2745.2 1272.8L2746.9 1315.2L2748.7 1291.0L2750.4 1278.9L2752.1 1278.9L2753.8 1291.0L2755.5 1278.9L2757.2 1254.7L2758.9 1260.7L2760.6 1254.7L2762.3 1254.7L2764.0 1254.7L2765.8 1254.7L2767.5 1291.0L2769.2 1254.7L2770.9 1315.2L2772.6 1327.3L2774.3 1315.2L2776.0 1327.3L2777.7 1315.2L2779.4 1327.3L2781.1 1315.2L2782.9 1254.7L2784.6 1278.9L2786.3 1266.8L2788.0 1254.7L2789.7 1315.2L2791.4 1254.7L2793.1 1272.8L2794.8 1266.8L2796.5 1272.8L2798.2 1254.7L2800.0 1260.7L2801.7 1315.2L2803.4 1315.2L2805.1 1266.8L2806.8 1327.3L2808.5 1315.2L2810.2 1327.3L2811.9 1327.3L2813.6 1315.2L2815.4 1327.3L2817.1 1315.2L2818.8 1327.3L2820.5 1327.3L2822.2 1315.2L2823.9 1327.3L2825.6 1315.2L2827.3 1333.4L2829.0 1315.2L2830.7 1315.2L2832.5 1315.2L2834.2 1315.2L2835.9 1315.2L2837.6 1363.7L2839.3 1315.2L2841.0 1278.9L2842.7 1327.3L2844.4 1278.9L2846.1 1315.2L2847.8 1266.8L2849.6 1266.8L2851.3 1327.3L2853.0 1278.9L2854.7 1278.9L2856.4 1315.2L2858.1 1254.7L2859.8 1291.0L2861.5 1315.2L2863.2 1315.2L2865.0 1315.2L2866.7 1303.1L2868.4 1315.2L2870.1 1315.2L2871.8 1291.0L2873.5 1291.0L2875.2 1327.3L2876.9 1315.2L2878.6 1291.0L2880.3 1315.2L2882.1 1278.9L2883.8 1303.1L2885.5 1291.0L2887.2 1278.9L2888.9 1315.2L2890.6 1315.2L2892.3 1315.2L2894.0 1254.7L2895.7 1291.0L2897.4 1260.7L2899.2 1266.8L2900.9 1266.8L2902.6 1254.7L2904.3 1278.9L2906.0 1272.8L2907.7 1260.7L2909.4 1254.7L2911.1 1278.9L2912.8 1266.8L2914.6 1254.7L2916.3 1278.9L2918.0 1315.2L2919.7 1266.8L2921.4 1272.8L2923.1 1254.7L2924.8 1266.8L2926.5 1303.1L2928.2 1254.7L2929.9 1266.8L2931.7 1254.7L2933.4 1266.8L2935.1 1291.0L2936.8 1278.9L2938.5 1266.8L2940.2 1254.7L2941.9 1278.9L2943.6 1254.7L2945.3 1303.1L2947.0 1254.7L2948.8 1278.9L2950.5 1254.7L2952.2 1260.7L2953.9 1303.1L2955.6 1315.2L2957.3 1315.2L2959.0 1291.0L2960.7 1327.3L2962.4 1315.2L2964.2 1303.1L2965.9 1291.0L2967.6 1303.1L2969.3 1291.0L2971.0 1315.2L2972.7 1303.1L2974.4 1291.0L2976.1 1266.8L2977.8 1315.2L2979.5 1303.1L2981.3 1315.2L2983.0 1291.0L2984.7 1278.9L2986.4 1327.3L2988.1 1291.0L2989.8 1327.3L2991.5 1327.3L2993.2 1278.9L2994.9 1260.7L2996.6 1254.7L2998.4 1254.7L3000.1 1254.7L3001.8 1254.7L3003.5 1291.0L3005.2 1254.7L3006.9 1291.0L3008.6 1266.8L3010.3 1315.2L3012.0 1315.2L3013.8 1278.9L3015.5 1315.2L3017.2 1291.0L3018.9 1254.7L3020.6 1278.9L3022.3 1254.7L3024.0 1254.7L3025.7 1315.2L3027.4 1315.2L3029.1 1315.2L3030.9 1315.2L3032.6 1327.3L3034.3 1315.2L3036.0 1315.2L3037.7 1339.5L3039.4 1327.3L3041.1 1339.5L3042.8 1327.3L3044.5 1315.2L3046.2 1315.2L3048.0 1327.3L3049.7 1339.5L3051.4 1327.3L3053.1 1315.2L3054.8 1333.4L3056.5 1315.2L3058.2 1315.2L3059.9 1315.2L3061.6 1315.2L3063.3 1339.5L3065.1 1327.3L3066.8 1327.3L3068.5 1327.3L3070.2 1315.2L3071.9 1291.0L3073.6 1278.9L3075.3 1254.7L3077.0 1266.8L3078.7 1266.8L3080.5 1254.7L3082.2 1315.2L3083.9 1315.2L3085.6 1339.5L3087.3 1315.2L3089.0 1315.2L3090.7 1315.2L3092.4 1327.3L3094.1 1339.5L3095.8 1315.2L3097.6 1315.2L3099.3 1327.3L3101.0 1327.3L3102.7 1315.2L3104.4 1333.4L3106.1 1315.2L3107.8 1315.2L3109.5 1333.4L3111.2 1339.5L3112.9 1327.3L3114.7 1291.0L3116.4 1315.2L3118.1 1315.2L3119.8 1278.9L3121.5 1254.7L3123.2 1327.3L3124.9 1278.9L3126.6 1327.3L3128.3 1291.0L3130.1 1291.0L3131.8 1303.1L3133.5 1303.1L3135.2 1315.2L3136.9 1254.7L3138.6 1315.2L3140.3 1315.2L3142.0 1303.1L3143.7 1254.7L3145.4 1278.9L3147.2 1278.9L3148.9 1266.8L3150.6 1315.2L3152.3 1291.0L3154.0 1260.7L3155.7 1303.1L3157.4 1315.2L3159.1 1254.7L3160.8 1278.9L3162.5 1260.7L3164.3 1254.7L3166.0 1315.2L3167.7 1278.9L3169.4 1260.7L3171.1 1260.7L3172.8 1272.8L3174.5 1254.7L3176.2 1254.7L3177.9 1254.7L3179.7 1272.8L3181.4 1254.7L3183.1 1303.1L3184.8 1272.8L3186.5 1278.9L3188.2 1315.2L3189.9 1315.2L3191.6 1315.2L3193.3 1327.3L3195.0 1339.5L3196.8 1339.5L3198.5 1254.7L3200.2 1315.2L3201.9 1266.8L3203.6 1327.3L3205.3 1303.1L3207.0 1291.0L3208.7 1278.9L3210.4 1339.5L3212.1 1315.2L3213.9 1339.5L3215.6 1315.2L3217.3 1278.9L3219.0 1315.2L3220.7 1315.2L3222.4 1291.0L3224.1 1315.2L3225.8 1339.5L3227.5 1291.0L3229.2 1327.3L3231.0 1272.8L3232.7 1278.9L3234.4 1278.9L3236.1 1327.3L3237.8 1315.2L3239.5 1278.9L3241.2 1327.3L3242.9 1272.8L3244.6 1272.8L3246.4 1291.0L3248.1 1315.2L3249.8 1327.3L3251.5 1315.2L3253.2 1315.2L3254.9 1272.8L3256.6 1317.7L3258.3 1317.7L3260.0 1315.2L3261.7 1315.2L3263.5 1321.3L3265.2 1320.1L3266.9 1315.2L3268.6 1315.2L3270.3 1315.2L3272.0 1375.8L3273.7 1320.1L3275.4 1315.2L3277.1 1312.8L3278.8 1315.2L3280.6 1315.2L3282.3 1315.2L3284.0 1315.2L3285.7 1315.2L3287.4 1315.2L3289.1 1315.2L3290.8 1315.2L3292.5 1320.1L3294.2 1317.7L3296.0 1315.2L3297.7 1315.2L3299.4 1315.2L3301.1 1291.0L3302.8 1291.0L3304.5 1291.0L3306.2 1254.7L3307.9 1266.8L3309.6 1278.9L3311.3 1315.2L3313.1 1315.2L3314.8 1327.3L3316.5 1291.0L3318.2 1339.5L3319.9 1315.2L3321.6 1291.0L3323.3 1327.3L3325.0 1278.9L3326.7 1291.0L3328.4 1315.2L3330.2 1303.1L3331.9 1315.2L3333.6 1315.2L3335.3 1327.3L3337.0 1327.3L3338.7 1327.3L3340.4 1327.3L3342.1 1272.8L3343.8 1278.9L3345.6 1315.2L3347.3 1315.2L3349.0 1327.3L3350.7 1327.3L3352.4 1315.2L3354.1 1254.7L3355.8 1254.7L3357.5 1266.8L3359.2 1260.7L3360.9 1266.8L3362.7 1254.7L3364.4 1291.0L3366.1 1291.0L3367.8 1278.9L3369.5 1327.3L3371.2 1315.2L3372.9 1327.3L3374.6 1266.8L3376.3 1303.1L3378.0 1266.8L3379.8 1278.9L3381.5 1291.0L3383.2 1315.2L3384.9 1278.9L3386.6 1315.2L3388.3 1315.2L3390.0 1315.2L3391.7 1327.3L3393.4 1315.2L3395.2 1339.5L3396.9 1315.2L3398.6 1315.2L3400.3 1315.2L3402.0 1327.3L3403.7 1315.2L3405.4 1339.5L3407.1 1315.2L3408.8 1315.2L3410.5 1315.2L3412.3 1266.8L3414.0 1278.9L3415.7 1278.9L3417.4 1303.1L3419.1 1266.8L3420.8 1266.8L3422.5 1278.9L3424.2 1272.8L3425.9 1254.7L3427.6 1278.9L3429.4 1254.7L3431.1 1266.8L3432.8 1278.9L3434.5 1315.2L3436.2 1254.7L3437.9 1315.2L3439.6 1254.7L3441.3 1254.7L3443.0 1254.7L3444.8 1278.9L3446.5 1254.7L3448.2 1266.8L3449.9 1254.7L3451.6 1272.8L3453.3 1266.8L3455.0 1272.8L3456.7 1278.9L3458.4 1278.9L3460.1 1272.8L3461.9 1315.2L3463.6 1333.4L3465.3 1333.4L3467.0 1315.2L3468.7 1327.3L3470.4 1339.5L3472.1 1315.2L3473.8 1327.3L3475.5 1315.2L3477.2 1327.3L3479.0 1315.2L3480.7 1327.3L3482.4 1339.5L3484.1 1333.4L3485.8 1327.3L3487.5 1327.3L3489.2 1327.3L3490.9 1278.9L3492.6 1266.8L3494.3 1315.2L3496.1 1315.2L3497.8 1315.2L3499.5 1315.2L3501.2 1315.2L3502.9 1315.2L3504.6 1315.2L3506.3 1327.3L3508.0 1333.4L3509.7 1315.2L3511.5 1327.3L3513.2 1327.3L3514.9 1369.7L3516.6 1327.3L3518.3 1315.2L3520.0 1333.4L3521.7 1327.3L3523.4 1333.4L3525.1 1315.2L3526.8 1327.3L3528.6 1266.8L3530.3 1272.8L3532.0 1291.0L3533.7 1278.9L3535.4 1254.7L3537.1 1254.7L3538.8 1254.7L3540.5 1254.7L3542.2 1266.8L3543.9 1254.7L3545.7 1266.8L3547.4 1254.7L3549.1 1266.8L3550.8 1315.2L3552.5 1315.2L3554.2 1315.2L3555.9 1315.2L3557.6 1327.3L3559.3 1315.2L3561.1 1339.5L3562.8 1272.8L3564.5 1303.1L3566.2 1303.1L3567.9 1303.1L3569.6 1272.8L3571.3 1278.9L3573.0 1315.2L3574.7 1303.1L3576.4 1315.2L3578.2 1315.2L3579.9 1339.5L3581.6 1291.0L3583.3 1351.6L3585.0 1327.3L3586.7 1315.2L3588.4 1327.3L3590.1 1315.2L3591.8 1315.2L3593.5 1315.2L3595.3 1303.1L3597.0 1303.1L3598.7 1315.2L3600.4 1291.0L3602.1 1303.1L3603.8 1278.9L3605.5 1278.9L3607.2 1303.1L3608.9 1266.8L3610.7 1278.9L3612.4 1254.7L3614.1 1278.9L3615.8 1254.7L3617.5 1278.9L3619.2 1278.9L3620.9 1260.7L3622.6 1272.8L3624.3 1272.8L3626.0 1291.0L3627.8 1303.1L3629.5 1291.0L3631.2 1278.9L3632.9 1266.8L3634.6 1278.9L3636.3 1254.7L3638.0 1291.0L3639.7 1291.0L3641.4 1254.7L3643.1 1272.8L3644.9 1266.8L3646.6 1254.7L3648.3 1254.7L3650.0 1254.7L3651.7 1315.2L3653.4 1303.1L3655.1 1315.2L3656.8 1303.1L3658.5 1266.8L3660.2 1315.2L3662.0 1315.2L3663.7 1327.3L3665.4 1278.9L3667.1 1272.8L3668.8 1254.7L3670.5 1254.7L3672.2 1303.1L3673.9 1278.9L3675.6 1315.2L3677.4 1260.7L3679.1 1254.7L3680.8 1254.7L3682.5 1315.2L3684.2 1254.7L3685.9 1254.7L3687.6 1315.2L3689.3 1278.9L3691.0 1260.7L3692.7 1272.8L3694.5 1266.8L3696.2 1266.8L3697.9 1266.8L3699.6 1254.7L3701.3 1254.7L3703.0 1303.1L3704.7 1254.7L3706.4 1278.9L3708.1 1254.7L3709.8 1254.7L3711.6 1272.8L3713.3 1303.1L3715.0 1278.9L3716.7 1278.9L3718.4 1333.4L3720.1 1315.2L3721.8 1327.3L3723.5 1315.2L3725.2 1315.2L3727.0 1315.2L3728.7 1327.3L3730.4 1333.4L3732.1 1315.2L3733.8 1254.7L3735.5 1254.7L3737.2 1278.9L3738.9 1278.9L3740.6 1260.7L3742.3 1315.2L3744.1 1315.2L3745.8 1339.5L3747.5 1339.5L3749.2 1315.2L3750.9 1327.3L3752.6 1315.2L3754.3 1327.3L3756.0 1315.2L3757.7 1315.2L3759.4 1315.2L3761.2 1315.2L3762.9 1315.2L3764.6 1285.0L3766.3 1303.1L3768.0 1315.2L3768.0 1400L2044.0 1400Z" fill="url(#gV)"/><path d="M2044.0 1339.5L2045.7 1327.3L2047.4 1315.2L2049.1 1339.5L2050.8 1327.3L2052.6 1333.4L2054.3 1327.3L2056.0 1315.2L2057.7 1315.2L2059.4 1339.5L2061.1 1333.4L2062.8 1254.7L2064.5 1254.7L2066.2 1254.7L2067.9 1315.2L2069.7 1315.2L2071.4 1327.3L2073.1 1315.2L2074.8 1327.3L2076.5 1333.4L2078.2 1315.2L2079.9 1339.5L2081.6 1315.2L2083.3 1327.3L2085.0 1315.2L2086.8 1315.2L2088.5 1339.5L2090.2 1315.2L2091.9 1315.2L2093.6 1315.2L2095.3 1339.5L2097.0 1315.2L2098.7 1339.5L2100.4 1254.7L2102.2 1254.7L2103.9 1254.7L2105.6 1278.9L2107.3 1254.7L2109.0 1254.7L2110.7 1327.3L2112.4 1315.2L2114.1 1339.5L2115.8 1333.4L2117.5 1327.3L2119.3 1266.8L2121.0 1303.1L2122.7 1303.1L2124.4 1315.2L2126.1 1254.7L2127.8 1266.8L2129.5 1315.2L2131.2 1315.2L2132.9 1315.2L2134.6 1254.7L2136.4 1327.3L2138.1 1254.7L2139.8 1303.1L2141.5 1266.8L2143.2 1303.1L2144.9 1315.2L2146.6 1278.9L2148.3 1278.9L2150.0 1266.8L2151.8 1254.7L2153.5 1266.8L2155.2 1278.9L2156.9 1291.0L2158.6 1303.1L2160.3 1315.2L2162.0 1315.2L2163.7 1327.3L2165.4 1315.2L2167.1 1315.2L2168.9 1333.4L2170.6 1327.3L2172.3 1315.2L2174.0 1327.3L2175.7 1315.2L2177.4 1315.2L2179.1 1327.3L2180.8 1327.3L2182.5 1333.4L2184.2 1315.2L2186.0 1327.3L2187.7 1315.2L2189.4 1327.3L2191.1 1291.0L2192.8 1278.9L2194.5 1278.9L2196.2 1315.2L2197.9 1266.8L2199.6 1278.9L2201.3 1327.3L2203.1 1315.2L2204.8 1315.2L2206.5 1272.8L2208.2 1315.2L2209.9 1327.3L2211.6 1291.0L2213.3 1327.3L2215.0 1291.0L2216.7 1327.3L2218.5 1327.3L2220.2 1315.2L2221.9 1291.0L2223.6 1272.8L2225.3 1315.2L2227.0 1327.3L2228.7 1339.5L2230.4 1272.8L2232.1 1272.8L2233.8 1315.2L2235.6 1315.2L2237.3 1303.1L2239.0 1315.2L2240.7 1291.0L2242.4 1254.7L2244.1 1260.7L2245.8 1278.9L2247.5 1315.2L2249.2 1266.8L2250.9 1278.9L2252.7 1291.0L2254.4 1266.8L2256.1 1254.7L2257.8 1303.1L2259.5 1327.3L2261.2 1327.3L2262.9 1339.5L2264.6 1315.2L2266.3 1315.2L2268.1 1327.3L2269.8 1315.2L2271.5 1315.2L2273.2 1315.2L2274.9 1327.3L2276.6 1327.3L2278.3 1327.3L2280.0 1327.3L2281.7 1315.2L2283.4 1333.4L2285.2 1315.2L2286.9 1327.3L2288.6 1315.2L2290.3 1333.4L2292.0 1315.2L2293.7 1315.2L2295.4 1315.2L2297.1 1303.1L2298.8 1278.9L2300.5 1303.1L2302.3 1315.2L2304.0 1315.2L2305.7 1315.2L2307.4 1315.2L2309.1 1303.1L2310.8 1315.2L2312.5 1339.5L2314.2 1327.3L2315.9 1315.2L2317.7 1327.3L2319.4 1315.2L2321.1 1254.7L2322.8 1278.9L2324.5 1254.7L2326.2 1278.9L2327.9 1254.7L2329.6 1266.8L2331.3 1303.1L2333.0 1303.1L2334.8 1315.2L2336.5 1327.3L2338.2 1333.4L2339.9 1315.2L2341.6 1339.5L2343.3 1327.3L2345.0 1303.1L2346.7 1315.2L2348.4 1278.9L2350.1 1278.9L2351.9 1278.9L2353.6 1278.9L2355.3 1315.2L2357.0 1327.3L2358.7 1315.2L2360.4 1339.5L2362.1 1315.2L2363.8 1327.3L2365.5 1315.2L2367.2 1327.3L2369.0 1327.3L2370.7 1315.2L2372.4 1278.9L2374.1 1254.7L2375.8 1327.3L2377.5 1315.2L2379.2 1327.3L2380.9 1254.7L2382.6 1315.2L2384.4 1315.2L2386.1 1315.2L2387.8 1278.9L2389.5 1254.7L2391.2 1327.3L2392.9 1315.2L2394.6 1303.1L2396.3 1254.7L2398.0 1278.9L2399.7 1315.2L2401.5 1303.1L2403.2 1254.7L2404.9 1278.9L2406.6 1315.2L2408.3 1315.2L2410.0 1327.3L2411.7 1327.3L2413.4 1327.3L2415.1 1327.3L2416.8 1327.3L2418.6 1327.3L2420.3 1327.3L2422.0 1315.2L2423.7 1327.3L2425.4 1327.3L2427.1 1327.3L2428.8 1315.2L2430.5 1315.2L2432.2 1327.3L2434.0 1327.3L2435.7 1333.4L2437.4 1339.5L2439.1 1315.2L2440.8 1333.4L2442.5 1315.2L2444.2 1327.3L2445.9 1333.4L2447.6 1339.5L2449.3 1333.4L2451.1 1315.2L2452.8 1327.3L2454.5 1260.7L2456.2 1254.7L2457.9 1254.7L2459.6 1266.8L2461.3 1254.7L2463.0 1266.8L2464.7 1303.1L2466.4 1315.2L2468.2 1315.2L2469.9 1315.2L2471.6 1278.9L2473.3 1303.1L2475.0 1303.1L2476.7 1254.7L2478.4 1303.1L2480.1 1303.1L2481.8 1278.9L2483.6 1303.1L2485.3 1303.1L2487.0 1315.2L2488.7 1266.8L2490.4 1278.9L2492.1 1327.3L2493.8 1327.3L2495.5 1291.0L2497.2 1327.3L2498.9 1315.2L2500.7 1315.2L2502.4 1254.7L2504.1 1254.7L2505.8 1236.5L2507.5 1206.2L2509.2 1254.7L2510.9 1254.7L2512.6 1254.7L2514.3 1254.7L2516.0 1291.0L2517.8 1254.7L2519.5 1266.8L2521.2 1254.7L2522.9 1291.0L2524.6 1303.1L2526.3 1303.1L2528.0 1278.9L2529.7 1291.0L2531.4 1315.2L2533.2 1266.8L2534.9 1272.8L2536.6 1315.2L2538.3 1266.8L2540.0 1315.2L2541.7 1266.8L2543.4 1278.9L2545.1 1272.8L2546.8 1260.7L2548.5 1272.8L2550.3 1254.7L2552.0 1291.0L2553.7 1254.7L2555.4 1278.9L2557.1 1272.8L2558.8 1315.2L2560.5 1266.8L2562.2 1266.8L2563.9 1272.8L2565.6 1303.1L2567.4 1291.0L2569.1 1303.1L2570.8 1272.8L2572.5 1327.3L2574.2 1272.8L2575.9 1327.3L2577.6 1327.3L2579.3 1327.3L2581.0 1339.5L2582.8 1327.3L2584.5 1327.3L2586.2 1291.0L2587.9 1315.2L2589.6 1327.3L2591.3 1327.3L2593.0 1327.3L2594.7 1291.0L2596.4 1315.2L2598.1 1315.2L2599.9 1327.3L2601.6 1278.9L2603.3 1278.9L2605.0 1327.3L2606.7 1339.5L2608.4 1327.3L2610.1 1303.1L2611.8 1315.2L2613.5 1315.2L2615.2 1315.2L2617.0 1278.9L2618.7 1303.1L2620.4 1303.1L2622.1 1327.3L2623.8 1291.0L2625.5 1303.1L2627.2 1254.7L2628.9 1254.7L2630.6 1254.7L2632.3 1272.8L2634.1 1303.1L2635.8 1266.8L2637.5 1254.7L2639.2 1254.7L2640.9 1278.9L2642.6 1254.7L2644.3 1278.9L2646.0 1260.7L2647.7 1266.8L2649.5 1291.0L2651.2 1315.2L2652.9 1303.1L2654.6 1254.7L2656.3 1278.9L2658.0 1254.7L2659.7 1254.7L2661.4 1254.7L2663.1 1254.7L2664.8 1254.7L2666.6 1254.7L2668.3 1278.9L2670.0 1291.0L2671.7 1272.8L2673.4 1254.7L2675.1 1303.1L2676.8 1278.9L2678.5 1272.8L2680.2 1272.8L2681.9 1254.7L2683.7 1254.7L2685.4 1254.7L2687.1 1291.0L2688.8 1303.1L2690.5 1260.7L2692.2 1266.8L2693.9 1254.7L2695.6 1278.9L2697.3 1266.8L2699.1 1315.2L2700.8 1254.7L2702.5 1254.7L2704.2 1254.7L2705.9 1291.0L2707.6 1272.8L2709.3 1272.8L2711.0 1266.8L2712.7 1278.9L2714.4 1339.5L2716.2 1315.2L2717.9 1315.2L2719.6 1315.2L2721.3 1339.5L2723.0 1327.3L2724.7 1278.9L2726.4 1291.0L2728.1 1278.9L2729.8 1339.5L2731.5 1327.3L2733.3 1291.0L2735.0 1315.2L2736.7 1327.3L2738.4 1278.9L2740.1 1327.3L2741.8 1278.9L2743.5 1315.2L2745.2 1272.8L2746.9 1315.2L2748.7 1291.0L2750.4 1278.9L2752.1 1278.9L2753.8 1291.0L2755.5 1278.9L2757.2 1254.7L2758.9 1260.7L2760.6 1254.7L2762.3 1254.7L2764.0 1254.7L2765.8 1254.7L2767.5 1291.0L2769.2 1254.7L2770.9 1315.2L2772.6 1327.3L2774.3 1315.2L2776.0 1327.3L2777.7 1315.2L2779.4 1327.3L2781.1 1315.2L2782.9 1254.7L2784.6 1278.9L2786.3 1266.8L2788.0 1254.7L2789.7 1315.2L2791.4 1254.7L2793.1 1272.8L2794.8 1266.8L2796.5 1272.8L2798.2 1254.7L2800.0 1260.7L2801.7 1315.2L2803.4 1315.2L2805.1 1266.8L2806.8 1327.3L2808.5 1315.2L2810.2 1327.3L2811.9 1327.3L2813.6 1315.2L2815.4 1327.3L2817.1 1315.2L2818.8 1327.3L2820.5 1327.3L2822.2 1315.2L2823.9 1327.3L2825.6 1315.2L2827.3 1333.4L2829.0 1315.2L2830.7 1315.2L2832.5 1315.2L2834.2 1315.2L2835.9 1315.2L2837.6 1363.7L2839.3 1315.2L2841.0 1278.9L2842.7 1327.3L2844.4 1278.9L2846.1 1315.2L2847.8 1266.8L2849.6 1266.8L2851.3 1327.3L2853.0 1278.9L2854.7 1278.9L2856.4 1315.2L2858.1 1254.7L2859.8 1291.0L2861.5 1315.2L2863.2 1315.2L2865.0 1315.2L2866.7 1303.1L2868.4 1315.2L2870.1 1315.2L2871.8 1291.0L2873.5 1291.0L2875.2 1327.3L2876.9 1315.2L2878.6 1291.0L2880.3 1315.2L2882.1 1278.9L2883.8 1303.1L2885.5 1291.0L2887.2 1278.9L2888.9 1315.2L2890.6 1315.2L2892.3 1315.2L2894.0 1254.7L2895.7 1291.0L2897.4 1260.7L2899.2 1266.8L2900.9 1266.8L2902.6 1254.7L2904.3 1278.9L2906.0 1272.8L2907.7 1260.7L2909.4 1254.7L2911.1 1278.9L2912.8 1266.8L2914.6 1254.7L2916.3 1278.9L2918.0 1315.2L2919.7 1266.8L2921.4 1272.8L2923.1 1254.7L2924.8 1266.8L2926.5 1303.1L2928.2 1254.7L2929.9 1266.8L2931.7 1254.7L2933.4 1266.8L2935.1 1291.0L2936.8 1278.9L2938.5 1266.8L2940.2 1254.7L2941.9 1278.9L2943.6 1254.7L2945.3 1303.1L2947.0 1254.7L2948.8 1278.9L2950.5 1254.7L2952.2 1260.7L2953.9 1303.1L2955.6 1315.2L2957.3 1315.2L2959.0 1291.0L2960.7 1327.3L2962.4 1315.2L2964.2 1303.1L2965.9 1291.0L2967.6 1303.1L2969.3 1291.0L2971.0 1315.2L2972.7 1303.1L2974.4 1291.0L2976.1 1266.8L2977.8 1315.2L2979.5 1303.1L2981.3 1315.2L2983.0 1291.0L2984.7 1278.9L2986.4 1327.3L2988.1 1291.0L2989.8 1327.3L2991.5 1327.3L2993.2 1278.9L2994.9 1260.7L2996.6 1254.7L2998.4 1254.7L3000.1 1254.7L3001.8 1254.7L3003.5 1291.0L3005.2 1254.7L3006.9 1291.0L3008.6 1266.8L3010.3 1315.2L3012.0 1315.2L3013.8 1278.9L3015.5 1315.2L3017.2 1291.0L3018.9 1254.7L3020.6 1278.9L3022.3 1254.7L3024.0 1254.7L3025.7 1315.2L3027.4 1315.2L3029.1 1315.2L3030.9 1315.2L3032.6 1327.3L3034.3 1315.2L3036.0 1315.2L3037.7 1339.5L3039.4 1327.3L3041.1 1339.5L3042.8 1327.3L3044.5 1315.2L3046.2 1315.2L3048.0 1327.3L3049.7 1339.5L3051.4 1327.3L3053.1 1315.2L3054.8 1333.4L3056.5 1315.2L3058.2 1315.2L3059.9 1315.2L3061.6 1315.2L3063.3 1339.5L3065.1 1327.3L3066.8 1327.3L3068.5 1327.3L3070.2 1315.2L3071.9 1291.0L3073.6 1278.9L3075.3 1254.7L3077.0 1266.8L3078.7 1266.8L3080.5 1254.7L3082.2 1315.2L3083.9 1315.2L3085.6 1339.5L3087.3 1315.2L3089.0 1315.2L3090.7 1315.2L3092.4 1327.3L3094.1 1339.5L3095.8 1315.2L3097.6 1315.2L3099.3 1327.3L3101.0 1327.3L3102.7 1315.2L3104.4 1333.4L3106.1 1315.2L3107.8 1315.2L3109.5 1333.4L3111.2 1339.5L3112.9 1327.3L3114.7 1291.0L3116.4 1315.2L3118.1 1315.2L3119.8 1278.9L3121.5 1254.7L3123.2 1327.3L3124.9 1278.9L3126.6 1327.3L3128.3 1291.0L3130.1 1291.0L3131.8 1303.1L3133.5 1303.1L3135.2 1315.2L3136.9 1254.7L3138.6 1315.2L3140.3 1315.2L3142.0 1303.1L3143.7 1254.7L3145.4 1278.9L3147.2 1278.9L3148.9 1266.8L3150.6 1315.2L3152.3 1291.0L3154.0 1260.7L3155.7 1303.1L3157.4 1315.2L3159.1 1254.7L3160.8 1278.9L3162.5 1260.7L3164.3 1254.7L3166.0 1315.2L3167.7 1278.9L3169.4 1260.7L3171.1 1260.7L3172.8 1272.8L3174.5 1254.7L3176.2 1254.7L3177.9 1254.7L3179.7 1272.8L3181.4 1254.7L3183.1 1303.1L3184.8 1272.8L3186.5 1278.9L3188.2 1315.2L3189.9 1315.2L3191.6 1315.2L3193.3 1327.3L3195.0 1339.5L3196.8 1339.5L3198.5 1254.7L3200.2 1315.2L3201.9 1266.8L3203.6 1327.3L3205.3 1303.1L3207.0 1291.0L3208.7 1278.9L3210.4 1339.5L3212.1 1315.2L3213.9 1339.5L3215.6 1315.2L3217.3 1278.9L3219.0 1315.2L3220.7 1315.2L3222.4 1291.0L3224.1 1315.2L3225.8 1339.5L3227.5 1291.0L3229.2 1327.3L3231.0 1272.8L3232.7 1278.9L3234.4 1278.9L3236.1 1327.3L3237.8 1315.2L3239.5 1278.9L3241.2 1327.3L3242.9 1272.8L3244.6 1272.8L3246.4 1291.0L3248.1 1315.2L3249.8 1327.3L3251.5 1315.2L3253.2 1315.2L3254.9 1272.8L3256.6 1317.7L3258.3 1317.7L3260.0 1315.2L3261.7 1315.2L3263.5 1321.3L3265.2 1320.1L3266.9 1315.2L3268.6 1315.2L3270.3 1315.2L3272.0 1375.8L3273.7 1320.1L3275.4 1315.2L3277.1 1312.8L3278.8 1315.2L3280.6 1315.2L3282.3 1315.2L3284.0 1315.2L3285.7 1315.2L3287.4 1315.2L3289.1 1315.2L3290.8 1315.2L3292.5 1320.1L3294.2 1317.7L3296.0 1315.2L3297.7 1315.2L3299.4 1315.2L3301.1 1291.0L3302.8 1291.0L3304.5 1291.0L3306.2 1254.7L3307.9 1266.8L3309.6 1278.9L3311.3 1315.2L3313.1 1315.2L3314.8 1327.3L3316.5 1291.0L3318.2 1339.5L3319.9 1315.2L3321.6 1291.0L3323.3 1327.3L3325.0 1278.9L3326.7 1291.0L3328.4 1315.2L3330.2 1303.1L3331.9 1315.2L3333.6 1315.2L3335.3 1327.3L3337.0 1327.3L3338.7 1327.3L3340.4 1327.3L3342.1 1272.8L3343.8 1278.9L3345.6 1315.2L3347.3 1315.2L3349.0 1327.3L3350.7 1327.3L3352.4 1315.2L3354.1 1254.7L3355.8 1254.7L3357.5 1266.8L3359.2 1260.7L3360.9 1266.8L3362.7 1254.7L3364.4 1291.0L3366.1 1291.0L3367.8 1278.9L3369.5 1327.3L3371.2 1315.2L3372.9 1327.3L3374.6 1266.8L3376.3 1303.1L3378.0 1266.8L3379.8 1278.9L3381.5 1291.0L3383.2 1315.2L3384.9 1278.9L3386.6 1315.2L3388.3 1315.2L3390.0 1315.2L3391.7 1327.3L3393.4 1315.2L3395.2 1339.5L3396.9 1315.2L3398.6 1315.2L3400.3 1315.2L3402.0 1327.3L3403.7 1315.2L3405.4 1339.5L3407.1 1315.2L3408.8 1315.2L3410.5 1315.2L3412.3 1266.8L3414.0 1278.9L3415.7 1278.9L3417.4 1303.1L3419.1 1266.8L3420.8 1266.8L3422.5 1278.9L3424.2 1272.8L3425.9 1254.7L3427.6 1278.9L3429.4 1254.7L3431.1 1266.8L3432.8 1278.9L3434.5 1315.2L3436.2 1254.7L3437.9 1315.2L3439.6 1254.7L3441.3 1254.7L3443.0 1254.7L3444.8 1278.9L3446.5 1254.7L3448.2 1266.8L3449.9 1254.7L3451.6 1272.8L3453.3 1266.8L3455.0 1272.8L3456.7 1278.9L3458.4 1278.9L3460.1 1272.8L3461.9 1315.2L3463.6 1333.4L3465.3 1333.4L3467.0 1315.2L3468.7 1327.3L3470.4 1339.5L3472.1 1315.2L3473.8 1327.3L3475.5 1315.2L3477.2 1327.3L3479.0 1315.2L3480.7 1327.3L3482.4 1339.5L3484.1 1333.4L3485.8 1327.3L3487.5 1327.3L3489.2 1327.3L3490.9 1278.9L3492.6 1266.8L3494.3 1315.2L3496.1 1315.2L3497.8 1315.2L3499.5 1315.2L3501.2 1315.2L3502.9 1315.2L3504.6 1315.2L3506.3 1327.3L3508.0 1333.4L3509.7 1315.2L3511.5 1327.3L3513.2 1327.3L3514.9 1369.7L3516.6 1327.3L3518.3 1315.2L3520.0 1333.4L3521.7 1327.3L3523.4 1333.4L3525.1 1315.2L3526.8 1327.3L3528.6 1266.8L3530.3 1272.8L3532.0 1291.0L3533.7 1278.9L3535.4 1254.7L3537.1 1254.7L3538.8 1254.7L3540.5 1254.7L3542.2 1266.8L3543.9 1254.7L3545.7 1266.8L3547.4 1254.7L3549.1 1266.8L3550.8 1315.2L3552.5 1315.2L3554.2 1315.2L3555.9 1315.2L3557.6 1327.3L3559.3 1315.2L3561.1 1339.5L3562.8 1272.8L3564.5 1303.1L3566.2 1303.1L3567.9 1303.1L3569.6 1272.8L3571.3 1278.9L3573.0 1315.2L3574.7 1303.1L3576.4 1315.2L3578.2 1315.2L3579.9 1339.5L3581.6 1291.0L3583.3 1351.6L3585.0 1327.3L3586.7 1315.2L3588.4 1327.3L3590.1 1315.2L3591.8 1315.2L3593.5 1315.2L3595.3 1303.1L3597.0 1303.1L3598.7 1315.2L3600.4 1291.0L3602.1 1303.1L3603.8 1278.9L3605.5 1278.9L3607.2 1303.1L3608.9 1266.8L3610.7 1278.9L3612.4 1254.7L3614.1 1278.9L3615.8 1254.7L3617.5 1278.9L3619.2 1278.9L3620.9 1260.7L3622.6 1272.8L3624.3 1272.8L3626.0 1291.0L3627.8 1303.1L3629.5 1291.0L3631.2 1278.9L3632.9 1266.8L3634.6 1278.9L3636.3 1254.7L3638.0 1291.0L3639.7 1291.0L3641.4 1254.7L3643.1 1272.8L3644.9 1266.8L3646.6 1254.7L3648.3 1254.7L3650.0 1254.7L3651.7 1315.2L3653.4 1303.1L3655.1 1315.2L3656.8 1303.1L3658.5 1266.8L3660.2 1315.2L3662.0 1315.2L3663.7 1327.3L3665.4 1278.9L3667.1 1272.8L3668.8 1254.7L3670.5 1254.7L3672.2 1303.1L3673.9 1278.9L3675.6 1315.2L3677.4 1260.7L3679.1 1254.7L3680.8 1254.7L3682.5 1315.2L3684.2 1254.7L3685.9 1254.7L3687.6 1315.2L3689.3 1278.9L3691.0 1260.7L3692.7 1272.8L3694.5 1266.8L3696.2 1266.8L3697.9 1266.8L3699.6 1254.7L3701.3 1254.7L3703.0 1303.1L3704.7 1254.7L3706.4 1278.9L3708.1 1254.7L3709.8 1254.7L3711.6 1272.8L3713.3 1303.1L3715.0 1278.9L3716.7 1278.9L3718.4 1333.4L3720.1 1315.2L3721.8 1327.3L3723.5 1315.2L3725.2 1315.2L3727.0 1315.2L3728.7 1327.3L3730.4 1333.4L3732.1 1315.2L3733.8 1254.7L3735.5 1254.7L3737.2 1278.9L3738.9 1278.9L3740.6 1260.7L3742.3 1315.2L3744.1 1315.2L3745.8 1339.5L3747.5 1339.5L3749.2 1315.2L3750.9 1327.3L3752.6 1315.2L3754.3 1327.3L3756.0 1315.2L3757.7 1315.2L3759.4 1315.2L3761.2 1315.2L3762.9 1315.2L3764.6 1285.0L3766.3 1303.1L3768.0 1315.2" fill="none" stroke="#85bd72" stroke-width="2" stroke-linejoin="round"/><text x="1947.27" y="1194.95" font-size="25" fill="#ccccdb" stroke="#ccccdb" stroke-width="0.25" stroke-linejoin="round" textLength="85.24" lengthAdjust="spacingAndGlyphs">257.5 V</text><text x="1943.48" y="1225.22" font-size="25" fill="#ccccdb" stroke="#ccccdb" stroke-width="0.25" stroke-linejoin="round" textLength="89.06" lengthAdjust="spacingAndGlyphs">255.0 V</text><text x="1943.48" y="1255.50" font-size="25" fill="#ccccdb" stroke="#ccccdb" stroke-width="0.25" stroke-linejoin="round" textLength="89.06" lengthAdjust="spacingAndGlyphs">252.5 V</text><text x="1943.48" y="1285.78" font-size="25" fill="#ccccdb" stroke="#ccccdb" stroke-width="0.25" stroke-linejoin="round" textLength="89.06" lengthAdjust="spacingAndGlyphs">250.0 V</text><text x="1946.44" y="1316.05" font-size="25" fill="#ccccdb" stroke="#ccccdb" stroke-width="0.25" stroke-linejoin="round" textLength="86.08" lengthAdjust="spacingAndGlyphs">247.5 V</text><text x="1943.48" y="1346.33" font-size="25" fill="#ccccdb" stroke="#ccccdb" stroke-width="0.25" stroke-linejoin="round" textLength="89.06" lengthAdjust="spacingAndGlyphs">245.0 V</text><text x="1942.87" y="1376.60" font-size="25" fill="#ccccdb" stroke="#ccccdb" stroke-width="0.25" stroke-linejoin="round" textLength="89.67" lengthAdjust="spacingAndGlyphs">242.5 V</text><text x="1942.87" y="1406.88" font-size="25" fill="#ccccdb" stroke="#ccccdb" stroke-width="0.25" stroke-linejoin="round" textLength="89.67" lengthAdjust="spacingAndGlyphs">240.0 V</text><text x="2085.41" y="1436.88" font-size="25" fill="#ccccdb" stroke="#ccccdb" stroke-width="0.25" stroke-linejoin="round" textLength="139.73" lengthAdjust="spacingAndGlyphs">12/03 00:00</text><text x="2331.50" y="1436.88" font-size="25" fill="#ccccdb" stroke="#ccccdb" stroke-width="0.25" stroke-linejoin="round" textLength="140.75" lengthAdjust="spacingAndGlyphs">12/04 00:00</text><text x="2577.59" y="1436.88" font-size="25" fill="#ccccdb" stroke="#ccccdb" stroke-width="0.25" stroke-linejoin="round" textLength="140.75" lengthAdjust="spacingAndGlyphs">12/05 00:00</text><text x="2823.66" y="1436.88" font-size="25" fill="#ccccdb" stroke="#ccccdb" stroke-width="0.25" stroke-linejoin="round" textLength="140.77" lengthAdjust="spacingAndGlyphs">12/06 00:00</text><text x="3069.77" y="1436.88" font-size="25" fill="#ccccdb" stroke="#ccccdb" stroke-width="0.25" stroke-linejoin="round" textLength="140.72" lengthAdjust="spacingAndGlyphs">12/07 00:00</text><text x="3316.87" y="1436.88" font-size="25" fill="#ccccdb" stroke="#ccccdb" stroke-width="0.25" stroke-linejoin="round" textLength="139.71" lengthAdjust="spacingAndGlyphs">12/08 00:00</text><text x="3562.93" y="1436.88" font-size="25" fill="#ccccdb" stroke="#ccccdb" stroke-width="0.25" stroke-linejoin="round" textLength="140.76" lengthAdjust="spacingAndGlyphs">12/09 00:00</text><rect x="1944" y="1473.8" width="28" height="8" rx="4" fill="#85bd72"/><text x="1987.09" y="1485.88" font-size="25" fill="#ccccdb" stroke="#ccccdb" stroke-width="0.25" stroke-linejoin="round" textLength="42.47" lengthAdjust="spacingAndGlyphs">ups</text><text x="2044.62" y="1485.88" font-size="25" fill="#ccccdb" stroke="#ccccdb" stroke-width="0.25" stroke-linejoin="round" textLength="170.50" lengthAdjust="spacingAndGlyphs">Last *: 247.0 V</text><path d="M3780.6 1519.8L3797.8 1502.6M3790.0 1519.8L3797.8 1512.0" stroke="#53555b" stroke-width="2.4" stroke-linecap="round" fill="none"/></svg></section>
<section class="panel " style="left:18px;top:1540px;width:1884px;height:592px"><svg width="1884" height="592" viewBox="18 1540 1884 592"><text x="35.49" y="1583.90" font-size="28.2" fill="#ccccdb" stroke="#ccccdb" stroke-width="1.0" stroke-linejoin="round" textLength="240.31" lengthAdjust="spacingAndGlyphs">Load (Watts) [1m]</text><defs><linearGradient id="gL" gradientUnits="userSpaceOnUse" x1="0" y1="1639" x2="0" y2="2008"><stop offset="0" stop-color="#85bd72" stop-opacity="0.1"/><stop offset="1" stop-color="#85bd72" stop-opacity="0"/></linearGradient></defs><rect x="212" y="1639" width="1" height="377" fill="rgba(240,250,255,0.09)"/><rect x="465" y="1639" width="1" height="377" fill="rgba(240,250,255,0.09)"/><rect x="718" y="1639" width="1" height="377" fill="rgba(240,250,255,0.09)"/><rect x="971" y="1639" width="1" height="377" fill="rgba(240,250,255,0.09)"/><rect x="1224" y="1639" width="1" height="377" fill="rgba(240,250,255,0.09)"/><rect x="1477" y="1639" width="1" height="377" fill="rgba(240,250,255,0.09)"/><rect x="1730" y="1639" width="1" height="377" fill="rgba(240,250,255,0.09)"/><rect x="96" y="1699" width="1772" height="1" fill="rgba(240,250,255,0.09)"/><rect x="96" y="1780" width="1772" height="1" fill="rgba(240,250,255,0.09)"/><rect x="96" y="1862" width="1772" height="1" fill="rgba(240,250,255,0.09)"/><rect x="96" y="1943" width="1772" height="1" fill="rgba(240,250,255,0.09)"/><path d="M96.0 1943.7L98.0 1930.1L99.9 1927.1L101.9 1955.9L103.9 1920.0L105.8 1937.8L107.8 1925.8L109.8 1892.3L111.8 1913.5L113.7 1925.9L115.7 1885.7L117.7 1896.7L119.6 1936.3L121.6 1925.4L123.6 1914.3L125.5 1932.0L127.5 1927.4L129.5 1959.9L131.4 1931.3L133.4 1923.7L135.4 1893.5L137.3 1878.0L139.3 1930.2L141.3 1941.5L143.3 1903.8L145.2 1896.1L147.2 1950.5L149.2 1915.7L151.1 1882.4L153.1 1921.8L155.1 1959.1L157.0 1916.8L159.0 1894.9L161.0 1901.0L162.9 1915.3L164.9 1909.1L166.9 1879.1L168.8 1882.0L170.8 1889.2L172.8 1894.2L174.8 1801.1L176.7 1929.8L178.7 1890.1L180.7 1924.3L182.6 1925.1L184.6 1894.5L186.6 1925.5L188.5 1900.0L190.5 1913.5L192.5 1950.3L194.4 1946.6L196.4 1935.1L198.4 1817.4L200.4 1897.9L202.3 1918.0L204.3 1878.8L206.3 1928.6L208.2 1872.0L210.2 1930.1L212.2 1901.7L214.1 1715.5L216.1 1740.0L218.1 1764.4L220.0 1923.1L222.0 1915.0L224.0 1895.5L225.9 1912.5L227.9 1958.0L229.9 1902.4L231.9 1817.4L233.8 1897.2L235.8 1949.5L237.8 1976.3L239.7 1933.0L241.7 1930.3L243.7 1870.4L245.6 1901.8L247.6 1873.3L249.6 1870.4L251.5 1921.8L253.5 1922.4L255.5 1930.5L257.4 1885.1L259.4 1907.3L261.4 1931.4L263.4 1912.8L265.3 1926.3L267.3 1913.7L269.3 1870.4L271.2 1934.6L273.2 1976.3L275.2 1924.6L277.1 1924.0L279.1 1908.8L281.1 1933.0L283.0 1931.3L285.0 1926.8L287.0 1854.0L289.0 1883.3L290.9 1919.3L292.9 1905.0L294.9 1914.1L296.8 1893.1L298.8 1925.2L300.8 1897.4L302.7 1870.4L304.7 1930.9L306.7 1951.8L308.6 1888.9L310.6 1902.6L312.6 1932.5L314.5 1923.6L316.5 1916.0L318.5 1911.6L320.5 1934.9L322.4 1939.7L324.4 1922.4L326.4 1914.0L328.3 1930.5L330.3 1920.9L332.3 1925.3L334.2 1874.5L336.2 1879.8L338.2 1920.1L340.1 1954.9L342.1 1898.5L344.1 1901.6L346.0 1898.4L348.0 1882.4L350.0 1918.2L352.0 1932.1L353.9 1937.2L355.9 1917.5L357.9 1902.6L359.8 1909.9L361.8 1917.6L363.8 1952.6L365.7 1913.7L367.7 1920.9L369.7 1931.9L371.6 1900.3L373.6 1908.5L375.6 1888.2L377.6 1912.6L379.5 1926.8L381.5 1913.9L383.5 1945.7L385.4 1916.5L387.4 1905.0L389.4 1833.7L391.3 1833.7L393.3 1908.3L395.3 1923.2L397.2 1957.8L399.2 1923.8L401.2 1917.7L403.1 1919.9L405.1 1876.6L407.1 1876.9L409.1 1892.0L411.0 1933.5L413.0 1898.1L415.0 1924.6L416.9 1941.3L418.9 1947.1L420.9 1895.7L422.8 1920.1L424.8 1953.4L426.8 1941.5L428.7 1924.2L430.7 1944.9L432.7 1915.4L434.6 1925.5L436.6 1934.9L438.6 1885.5L440.6 1923.4L442.5 1893.7L444.5 1916.4L446.5 1917.0L448.4 1934.2L450.4 1909.2L452.4 1916.0L454.3 1913.8L456.3 1833.7L458.3 1888.8L460.2 1833.7L462.2 1940.2L464.2 1928.3L466.2 1740.0L468.1 1740.0L470.1 1740.0L472.1 1944.2L474.0 1907.9L476.0 1879.1L478.0 1886.3L479.9 1940.4L481.9 1930.8L483.9 1917.3L485.8 1917.4L487.8 1976.3L489.8 1941.6L491.7 1925.1L493.7 1919.4L495.7 1904.0L497.7 1925.0L499.6 1912.8L501.6 1870.4L503.6 1916.1L505.5 1915.4L507.5 1937.9L509.5 1937.8L511.4 1889.8L513.4 1912.4L515.4 1870.4L517.3 1897.6L519.3 1886.5L521.3 1936.0L523.2 1924.0L525.2 1899.5L527.2 1885.0L529.2 1927.6L531.1 1917.2L533.1 1875.6L535.1 1915.9L537.0 1918.2L539.0 1919.2L541.0 1920.4L542.9 1930.7L544.9 1934.3L546.9 1880.1L548.8 1915.2L550.8 1888.2L552.8 1927.1L554.8 1886.2L556.7 1873.8L558.7 1917.4L560.7 1911.7L562.6 1932.7L564.6 1951.5L566.6 1922.1L568.5 1801.1L570.5 1917.9L572.5 1940.4L574.4 1909.4L576.4 1833.7L578.4 1935.4L580.3 1891.8L582.3 1911.8L584.3 1891.4L586.3 1926.8L588.2 1926.7L590.2 1929.4L592.2 1908.0L594.1 1956.0L596.1 1892.4L598.1 1919.1L600.0 1882.9L602.0 1950.9L604.0 1945.4L605.9 1896.6L607.9 1938.0L609.9 1957.7L611.8 1948.9L613.8 1922.6L615.8 1933.8L617.8 1883.5L619.7 1936.0L621.7 1872.6L623.7 1887.6L625.6 1886.8L627.6 1897.5L629.6 1912.1L631.5 1929.5L633.5 1951.6L635.5 1927.1L637.4 1953.1L639.4 1935.9L641.4 1936.6L643.4 1878.3L645.3 1907.2L647.3 1870.7L649.3 1931.9L651.2 1873.4L653.2 1949.5L655.2 1948.3L657.1 1917.3L659.1 1950.1L661.1 1915.5L663.0 1910.2L665.0 1854.0L667.0 1901.3L668.9 1913.2L670.9 1913.2L672.9 1922.4L674.9 1907.3L676.8 1957.4L678.8 1928.4L680.8 1920.9L682.7 1916.1L684.7 1928.4L686.7 1952.3L688.6 1928.4L690.6 1933.2L692.6 1894.8L694.5 1934.4L696.5 1919.1L698.5 1894.1L700.4 1923.4L702.4 1817.4L704.4 1900.1L706.4 1913.3L708.3 1928.2L710.3 1928.8L712.3 1891.7L714.2 1919.1L716.2 1876.6L718.2 1817.4L720.1 1918.7L722.1 1955.4L724.1 1723.7L726.0 1740.0L728.0 1949.0L730.0 1911.5L732.0 1937.9L733.9 1854.0L735.9 1900.2L737.9 1937.3L739.8 1954.5L741.8 1896.0L743.8 1919.8L745.7 1893.0L747.7 1924.3L749.7 1891.3L751.6 1929.4L753.6 1938.4L755.6 1942.8L757.5 1976.3L759.5 1939.0L761.5 1943.3L763.5 1914.0L765.4 1915.0L767.4 1944.5L769.4 1945.2L771.3 1926.2L773.3 1884.6L775.3 1940.8L777.2 1926.4L779.2 1878.2L781.2 1921.7L783.1 1919.1L785.1 1946.4L787.1 1932.6L789.0 1909.0L791.0 1916.1L793.0 1900.3L795.0 1917.7L796.9 1923.9L798.9 1878.6L800.9 1921.1L802.8 1913.8L804.8 1920.3L806.8 1959.2L808.7 1931.9L810.7 1937.8L812.7 1925.2L814.6 1938.1L816.6 1910.7L818.6 1914.4L820.6 1940.1L822.5 1699.2L824.5 1931.2L826.5 1931.0L828.4 1878.8L830.4 1916.1L832.4 1833.7L834.3 1889.1L836.3 1959.3L838.3 1892.9L840.2 1881.8L842.2 1833.7L844.2 1917.9L846.1 1918.9L848.1 1896.9L850.1 1895.3L852.1 1922.8L854.0 1920.2L856.0 1939.8L858.0 1854.0L859.9 1949.0L861.9 1929.4L863.9 1920.2L865.8 1928.6L867.8 1910.1L869.8 1920.7L871.7 1918.0L873.7 1931.0L875.7 1912.7L877.6 1959.8L879.6 1921.2L881.6 1919.7L883.6 1955.0L885.5 1926.2L887.5 1892.5L889.5 1956.8L891.4 1925.1L893.4 1913.0L895.4 1921.6L897.3 1877.8L899.3 1792.9L901.3 1919.4L903.2 1953.1L905.2 1887.3L907.2 1925.2L909.2 1939.2L911.1 1954.8L913.1 1932.1L915.1 1904.6L917.0 1885.2L919.0 1910.6L921.0 1875.8L922.9 1943.1L924.9 1893.0L926.9 1923.5L928.8 1931.1L930.8 1890.1L932.8 1901.8L934.7 1925.4L936.7 1890.7L938.7 1920.2L940.7 1907.7L942.6 1870.6L944.6 1917.4L946.6 1944.7L948.5 1854.0L950.5 1943.8L952.5 1925.4L954.4 1879.1L956.4 1958.7L958.4 1928.4L960.3 1931.0L962.3 1898.4L964.3 1880.9L966.2 1904.0L968.2 1889.8L970.2 1925.1L972.2 1688.3L974.1 1889.7L976.1 1744.1L978.1 1732.8L980.0 1932.2L982.0 1935.7L984.0 1926.6L985.9 1889.9L987.9 1911.8L989.9 1917.4L991.8 1936.4L993.8 1892.2L995.8 1951.5L997.8 1890.6L999.7 1916.5L1001.7 1940.5L1003.7 1878.0L1005.6 1930.7L1007.6 1924.2L1009.6 1879.7L1011.5 1938.0L1013.5 1923.0L1015.5 1872.1L1017.4 1919.9L1019.4 1844.8L1021.4 1917.1L1023.3 1958.3L1025.3 1966.0L1027.3 1871.2L1029.3 1873.5L1031.2 1933.9L1033.2 1957.8L1035.2 1926.3L1037.1 1852.8L1039.1 1924.5L1041.1 1957.5L1043.0 1949.6L1045.0 1916.0L1047.0 1901.9L1048.9 1870.8L1050.9 1852.8L1052.9 1926.9L1054.8 1906.5L1056.8 1937.3L1058.8 1896.4L1060.8 1931.7L1062.7 1890.4L1064.7 1915.4L1066.7 1949.4L1068.6 1951.2L1070.6 1881.1L1072.6 1871.7L1074.5 1909.9L1076.5 1818.4L1078.5 1913.5L1080.4 1921.2L1082.4 1933.5L1084.4 1914.6L1086.4 1929.9L1088.3 1910.6L1090.3 1928.5L1092.3 1913.6L1094.2 1879.3L1096.2 1926.6L1098.2 1935.8L1100.1 1950.1L1102.1 1898.9L1104.1 1931.5L1106.0 1852.8L1108.0 1919.2L1110.0 1920.7L1111.9 1912.2L1113.9 1900.7L1115.9 1905.9L1117.9 1924.6L1119.8 1918.7L1121.8 1928.3L1123.8 1917.3L1125.7 1974.3L1127.7 1885.4L1129.7 1913.4L1131.6 1943.5L1133.6 1873.8L1135.6 1921.3L1137.5 1930.0L1139.5 1901.9L1141.5 1910.3L1143.4 1947.7L1145.4 1909.4L1147.4 1893.3L1149.4 1923.0L1151.3 1914.5L1153.3 1947.1L1155.3 1874.3L1157.2 1902.2L1159.2 1882.3L1161.2 1874.3L1163.1 1899.5L1165.1 1930.1L1167.1 1900.3L1169.0 1910.5L1171.0 1835.4L1173.0 1914.7L1175.0 1952.9L1176.9 1897.0L1178.9 1881.3L1180.9 1917.7L1182.8 1951.7L1184.8 1927.7L1186.8 1958.2L1188.7 1870.5L1190.7 1951.2L1192.7 1870.9L1194.6 1934.1L1196.6 1883.4L1198.6 1941.7L1200.5 1923.6L1202.5 1870.5L1204.5 1921.1L1206.5 1912.7L1208.4 1873.7L1210.4 1909.8L1212.4 1918.8L1214.3 1910.0L1216.3 1884.8L1218.3 1926.7L1220.2 1951.6L1222.2 1933.8L1224.2 1922.6L1226.1 1800.7L1228.1 1766.7L1230.1 1883.1L1232.0 1815.8L1234.0 1924.6L1236.0 1919.3L1238.0 1928.8L1239.9 1884.0L1241.9 1907.4L1243.9 1918.1L1245.8 1916.6L1247.8 1902.4L1249.8 1926.1L1251.7 1929.0L1253.7 1918.3L1255.7 1873.4L1257.6 1939.4L1259.6 1809.4L1261.6 1936.6L1263.6 1974.3L1265.5 1926.3L1267.5 1949.9L1269.5 1876.2L1271.4 1894.6L1273.4 1878.8L1275.4 1920.4L1277.3 1925.0L1279.3 1940.8L1281.3 1909.4L1283.2 1918.1L1285.2 1914.1L1287.2 1912.1L1289.1 1895.1L1291.1 1914.6L1293.1 1945.9L1295.1 1901.8L1297.0 1913.1L1299.0 1922.1L1301.0 1949.0L1302.9 1946.8L1304.9 1928.9L1306.9 1943.8L1308.8 1923.6L1310.8 1923.2L1312.8 1912.2L1314.7 1917.8L1316.7 1939.9L1318.7 1933.2L1320.6 1915.6L1322.6 1929.9L1324.6 1891.6L1326.6 1885.0L1328.5 1896.3L1330.5 1852.8L1332.5 1946.5L1334.4 1930.4L1336.4 1890.5L1338.4 1880.4L1340.3 1942.3L1342.3 1897.0L1344.3 1945.2L1346.2 1940.3L1348.2 1922.5L1350.2 1852.8L1352.2 1954.3L1354.1 1911.3L1356.1 1912.0L1358.1 1920.1L1360.0 1874.2L1362.0 1954.4L1364.0 1911.3L1365.9 1901.6L1367.9 1883.5L1369.9 1892.8L1371.8 1801.5L1373.8 1801.5L1375.8 1953.3L1377.7 1908.8L1379.7 1896.3L1381.7 1953.0L1383.7 1937.4L1385.6 1893.4L1387.6 1940.8L1389.6 1902.2L1391.5 1907.4L1393.5 1910.9L1395.5 1835.4L1397.4 1948.2L1399.4 1880.5L1401.4 1900.8L1403.3 1882.3L1405.3 1852.8L1407.3 1927.2L1409.2 1890.5L1411.2 1947.7L1413.2 1939.4L1415.2 1927.6L1417.1 1920.3L1419.1 1899.9L1421.1 1945.9L1423.0 1884.0L1425.0 1835.4L1427.0 1890.2L1428.9 1937.1L1430.9 1926.7L1432.9 1886.8L1434.8 1930.5L1436.8 1936.1L1438.8 1957.4L1440.8 1919.5L1442.7 1951.9L1444.7 1887.7L1446.7 1911.6L1448.6 1924.1L1450.6 1919.3L1452.6 1936.0L1454.5 1852.8L1456.5 1917.0L1458.5 1938.4L1460.4 1898.5L1462.4 1905.6L1464.4 1944.4L1466.3 1917.2L1468.3 1880.8L1470.3 1902.9L1472.3 1915.7L1474.2 1920.5L1476.2 1909.0L1478.2 1930.9L1480.1 1744.1L1482.1 1680.0L1484.1 1912.8L1486.0 1953.1L1488.0 1931.9L1490.0 1870.5L1491.9 1882.7L1493.9 1930.7L1495.9 1953.9L1497.8 1925.3L1499.8 1894.8L1501.8 1939.9L1503.8 1918.6L1505.7 1899.6L1507.7 1918.6L1509.7 1888.2L1511.6 1927.6L1513.6 1847.2L1515.6 1840.3L1517.5 1845.3L1519.5 1861.0L1521.5 1783.7L1523.4 1885.3L1525.4 1837.4L1527.4 1841.4L1529.4 1860.0L1531.3 1783.7L1533.3 1861.9L1535.3 1812.7L1537.2 1847.1L1539.2 1803.4L1541.2 1841.2L1543.1 1837.2L1545.1 1835.9L1547.1 1867.6L1549.0 1833.0L1551.0 1797.6L1553.0 1766.7L1554.9 1912.9L1556.9 1841.0L1558.9 1805.3L1560.9 1841.4L1562.8 1883.6L1564.8 1843.4L1566.8 1855.3L1568.7 1792.4L1570.7 1877.6L1572.7 1866.2L1574.6 1821.8L1576.6 1872.5L1578.6 1947.5L1580.5 1892.4L1582.5 1884.5L1584.5 1882.6L1586.4 1941.1L1588.4 1926.7L1590.4 1941.9L1592.4 1974.3L1594.3 1922.8L1596.3 1887.2L1598.3 1917.3L1600.2 1874.7L1602.2 1937.8L1604.2 1680.0L1606.1 1885.0L1608.1 1927.4L1610.1 1927.2L1612.0 1909.8L1614.0 1921.7L1616.0 1920.2L1618.0 1899.1L1619.9 1891.2L1621.9 1919.1L1623.9 1948.1L1625.8 1896.1L1627.8 1908.3L1629.8 1920.4L1631.7 1706.4L1633.7 1931.9L1635.7 1917.9L1637.6 1872.0L1639.6 1952.0L1641.6 1921.4L1643.5 1884.1L1645.5 1890.3L1647.5 1951.6L1649.5 1898.1L1651.4 1951.1L1653.4 1942.4L1655.4 1923.3L1657.3 1953.7L1659.3 1835.4L1661.3 1917.0L1663.2 1919.1L1665.2 1891.5L1667.2 1916.8L1669.1 1886.6L1671.1 1927.0L1673.1 1909.4L1675.0 1874.2L1677.0 1954.0L1679.0 1818.4L1681.0 1914.0L1682.9 1923.0L1684.9 1917.6L1686.9 1913.7L1688.8 1924.2L1690.8 1959.7L1692.8 1882.3L1694.7 1951.3L1696.7 1882.9L1698.7 1915.2L1700.6 1930.0L1702.6 1930.4L1704.6 1870.5L1706.6 1936.3L1708.5 1916.7L1710.5 1919.5L1712.5 1907.0L1714.4 1906.7L1716.4 1918.3L1718.4 1941.6L1720.3 1887.7L1722.3 1870.5L1724.3 1928.0L1726.2 1905.3L1728.2 1917.6L1730.2 1925.4L1732.1 1766.7L1734.1 1901.1L1736.1 1755.4L1738.1 1732.8L1740.0 1901.6L1742.0 1912.8L1744.0 1974.3L1745.9 1870.5L1747.9 1893.8L1749.9 1926.1L1751.8 1884.9L1753.8 1929.2L1755.8 1920.8L1757.7 1919.5L1759.7 1934.5L1761.7 1915.4L1763.6 1901.8L1765.6 1956.7L1767.6 1913.0L1769.6 1897.0L1771.5 1912.7L1773.5 1933.2L1775.5 1870.7L1777.4 1882.4L1779.4 1922.3L1781.4 1928.2L1783.3 1852.8L1785.3 1950.9L1787.3 1950.3L1789.2 1920.4L1791.2 1898.8L1793.2 1926.7L1795.2 1872.3L1797.1 1920.1L1799.1 1974.3L1801.1 1927.5L1803.0 1943.1L1805.0 1937.4L1807.0 1882.4L1808.9 1916.7L1810.9 1931.1L1812.9 1912.2L1814.8 1924.8L1816.8 1884.1L1818.8 1956.9L1820.7 1956.4L1822.7 1945.0L1824.7 1818.4L1826.7 1930.6L1828.6 1889.3L1830.6 1946.3L1832.6 1928.2L1834.5 1952.5L1836.5 1920.9L1838.5 1873.8L1840.4 1945.8L1842.4 1870.5L1844.4 1910.4L1846.3 1925.9L1848.3 1922.7L1850.3 1891.1L1852.2 1953.2L1854.2 1852.8L1856.2 1902.5L1858.2 1861.1L1860.1 1928.9L1862.1 1952.0L1864.1 1912.2L1866.0 1888.5L1868.0 1914.8L1868.0 2008L96.0 2008Z" fill="url(#gL)"/><path d="M96.0 1943.7L98.0 1930.1L99.9 1927.1L101.9 1955.9L103.9 1920.0L105.8 1937.8L107.8 1925.8L109.8 1892.3L111.8 1913.5L113.7 1925.9L115.7 1885.7L117.7 1896.7L119.6 1936.3L121.6 1925.4L123.6 1914.3L125.5 1932.0L127.5 1927.4L129.5 1959.9L131.4 1931.3L133.4 1923.7L135.4 1893.5L137.3 1878.0L139.3 1930.2L141.3 1941.5L143.3 1903.8L145.2 1896.1L147.2 1950.5L149.2 1915.7L151.1 1882.4L153.1 1921.8L155.1 1959.1L157.0 1916.8L159.0 1894.9L161.0 1901.0L162.9 1915.3L164.9 1909.1L166.9 1879.1L168.8 1882.0L170.8 1889.2L172.8 1894.2L174.8 1801.1L176.7 1929.8L178.7 1890.1L180.7 1924.3L182.6 1925.1L184.6 1894.5L186.6 1925.5L188.5 1900.0L190.5 1913.5L192.5 1950.3L194.4 1946.6L196.4 1935.1L198.4 1817.4L200.4 1897.9L202.3 1918.0L204.3 1878.8L206.3 1928.6L208.2 1872.0L210.2 1930.1L212.2 1901.7L214.1 1715.5L216.1 1740.0L218.1 1764.4L220.0 1923.1L222.0 1915.0L224.0 1895.5L225.9 1912.5L227.9 1958.0L229.9 1902.4L231.9 1817.4L233.8 1897.2L235.8 1949.5L237.8 1976.3L239.7 1933.0L241.7 1930.3L243.7 1870.4L245.6 1901.8L247.6 1873.3L249.6 1870.4L251.5 1921.8L253.5 1922.4L255.5 1930.5L257.4 1885.1L259.4 1907.3L261.4 1931.4L263.4 1912.8L265.3 1926.3L267.3 1913.7L269.3 1870.4L271.2 1934.6L273.2 1976.3L275.2 1924.6L277.1 1924.0L279.1 1908.8L281.1 1933.0L283.0 1931.3L285.0 1926.8L287.0 1854.0L289.0 1883.3L290.9 1919.3L292.9 1905.0L294.9 1914.1L296.8 1893.1L298.8 1925.2L300.8 1897.4L302.7 1870.4L304.7 1930.9L306.7 1951.8L308.6 1888.9L310.6 1902.6L312.6 1932.5L314.5 1923.6L316.5 1916.0L318.5 1911.6L320.5 1934.9L322.4 1939.7L324.4 1922.4L326.4 1914.0L328.3 1930.5L330.3 1920.9L332.3 1925.3L334.2 1874.5L336.2 1879.8L338.2 1920.1L340.1 1954.9L342.1 1898.5L344.1 1901.6L346.0 1898.4L348.0 1882.4L350.0 1918.2L352.0 1932.1L353.9 1937.2L355.9 1917.5L357.9 1902.6L359.8 1909.9L361.8 1917.6L363.8 1952.6L365.7 1913.7L367.7 1920.9L369.7 1931.9L371.6 1900.3L373.6 1908.5L375.6 1888.2L377.6 1912.6L379.5 1926.8L381.5 1913.9L383.5 1945.7L385.4 1916.5L387.4 1905.0L389.4 1833.7L391.3 1833.7L393.3 1908.3L395.3 1923.2L397.2 1957.8L399.2 1923.8L401.2 1917.7L403.1 1919.9L405.1 1876.6L407.1 1876.9L409.1 1892.0L411.0 1933.5L413.0 1898.1L415.0 1924.6L416.9 1941.3L418.9 1947.1L420.9 1895.7L422.8 1920.1L424.8 1953.4L426.8 1941.5L428.7 1924.2L430.7 1944.9L432.7 1915.4L434.6 1925.5L436.6 1934.9L438.6 1885.5L440.6 1923.4L442.5 1893.7L444.5 1916.4L446.5 1917.0L448.4 1934.2L450.4 1909.2L452.4 1916.0L454.3 1913.8L456.3 1833.7L458.3 1888.8L460.2 1833.7L462.2 1940.2L464.2 1928.3L466.2 1740.0L468.1 1740.0L470.1 1740.0L472.1 1944.2L474.0 1907.9L476.0 1879.1L478.0 1886.3L479.9 1940.4L481.9 1930.8L483.9 1917.3L485.8 1917.4L487.8 1976.3L489.8 1941.6L491.7 1925.1L493.7 1919.4L495.7 1904.0L497.7 1925.0L499.6 1912.8L501.6 1870.4L503.6 1916.1L505.5 1915.4L507.5 1937.9L509.5 1937.8L511.4 1889.8L513.4 1912.4L515.4 1870.4L517.3 1897.6L519.3 1886.5L521.3 1936.0L523.2 1924.0L525.2 1899.5L527.2 1885.0L529.2 1927.6L531.1 1917.2L533.1 1875.6L535.1 1915.9L537.0 1918.2L539.0 1919.2L541.0 1920.4L542.9 1930.7L544.9 1934.3L546.9 1880.1L548.8 1915.2L550.8 1888.2L552.8 1927.1L554.8 1886.2L556.7 1873.8L558.7 1917.4L560.7 1911.7L562.6 1932.7L564.6 1951.5L566.6 1922.1L568.5 1801.1L570.5 1917.9L572.5 1940.4L574.4 1909.4L576.4 1833.7L578.4 1935.4L580.3 1891.8L582.3 1911.8L584.3 1891.4L586.3 1926.8L588.2 1926.7L590.2 1929.4L592.2 1908.0L594.1 1956.0L596.1 1892.4L598.1 1919.1L600.0 1882.9L602.0 1950.9L604.0 1945.4L605.9 1896.6L607.9 1938.0L609.9 1957.7L611.8 1948.9L613.8 1922.6L615.8 1933.8L617.8 1883.5L619.7 1936.0L621.7 1872.6L623.7 1887.6L625.6 1886.8L627.6 1897.5L629.6 1912.1L631.5 1929.5L633.5 1951.6L635.5 1927.1L637.4 1953.1L639.4 1935.9L641.4 1936.6L643.4 1878.3L645.3 1907.2L647.3 1870.7L649.3 1931.9L651.2 1873.4L653.2 1949.5L655.2 1948.3L657.1 1917.3L659.1 1950.1L661.1 1915.5L663.0 1910.2L665.0 1854.0L667.0 1901.3L668.9 1913.2L670.9 1913.2L672.9 1922.4L674.9 1907.3L676.8 1957.4L678.8 1928.4L680.8 1920.9L682.7 1916.1L684.7 1928.4L686.7 1952.3L688.6 1928.4L690.6 1933.2L692.6 1894.8L694.5 1934.4L696.5 1919.1L698.5 1894.1L700.4 1923.4L702.4 1817.4L704.4 1900.1L706.4 1913.3L708.3 1928.2L710.3 1928.8L712.3 1891.7L714.2 1919.1L716.2 1876.6L718.2 1817.4L720.1 1918.7L722.1 1955.4L724.1 1723.7L726.0 1740.0L728.0 1949.0L730.0 1911.5L732.0 1937.9L733.9 1854.0L735.9 1900.2L737.9 1937.3L739.8 1954.5L741.8 1896.0L743.8 1919.8L745.7 1893.0L747.7 1924.3L749.7 1891.3L751.6 1929.4L753.6 1938.4L755.6 1942.8L757.5 1976.3L759.5 1939.0L761.5 1943.3L763.5 1914.0L765.4 1915.0L767.4 1944.5L769.4 1945.2L771.3 1926.2L773.3 1884.6L775.3 1940.8L777.2 1926.4L779.2 1878.2L781.2 1921.7L783.1 1919.1L785.1 1946.4L787.1 1932.6L789.0 1909.0L791.0 1916.1L793.0 1900.3L795.0 1917.7L796.9 1923.9L798.9 1878.6L800.9 1921.1L802.8 1913.8L804.8 1920.3L806.8 1959.2L808.7 1931.9L810.7 1937.8L812.7 1925.2L814.6 1938.1L816.6 1910.7L818.6 1914.4L820.6 1940.1L822.5 1699.2L824.5 1931.2L826.5 1931.0L828.4 1878.8L830.4 1916.1L832.4 1833.7L834.3 1889.1L836.3 1959.3L838.3 1892.9L840.2 1881.8L842.2 1833.7L844.2 1917.9L846.1 1918.9L848.1 1896.9L850.1 1895.3L852.1 1922.8L854.0 1920.2L856.0 1939.8L858.0 1854.0L859.9 1949.0L861.9 1929.4L863.9 1920.2L865.8 1928.6L867.8 1910.1L869.8 1920.7L871.7 1918.0L873.7 1931.0L875.7 1912.7L877.6 1959.8L879.6 1921.2L881.6 1919.7L883.6 1955.0L885.5 1926.2L887.5 1892.5L889.5 1956.8L891.4 1925.1L893.4 1913.0L895.4 1921.6L897.3 1877.8L899.3 1792.9L901.3 1919.4L903.2 1953.1L905.2 1887.3L907.2 1925.2L909.2 1939.2L911.1 1954.8L913.1 1932.1L915.1 1904.6L917.0 1885.2L919.0 1910.6L921.0 1875.8L922.9 1943.1L924.9 1893.0L926.9 1923.5L928.8 1931.1L930.8 1890.1L932.8 1901.8L934.7 1925.4L936.7 1890.7L938.7 1920.2L940.7 1907.7L942.6 1870.6L944.6 1917.4L946.6 1944.7L948.5 1854.0L950.5 1943.8L952.5 1925.4L954.4 1879.1L956.4 1958.7L958.4 1928.4L960.3 1931.0L962.3 1898.4L964.3 1880.9L966.2 1904.0L968.2 1889.8L970.2 1925.1L972.2 1688.3L974.1 1889.7L976.1 1744.1L978.1 1732.8L980.0 1932.2L982.0 1935.7L984.0 1926.6L985.9 1889.9L987.9 1911.8L989.9 1917.4L991.8 1936.4L993.8 1892.2L995.8 1951.5L997.8 1890.6L999.7 1916.5L1001.7 1940.5L1003.7 1878.0L1005.6 1930.7L1007.6 1924.2L1009.6 1879.7L1011.5 1938.0L1013.5 1923.0L1015.5 1872.1L1017.4 1919.9L1019.4 1844.8L1021.4 1917.1L1023.3 1958.3L1025.3 1966.0L1027.3 1871.2L1029.3 1873.5L1031.2 1933.9L1033.2 1957.8L1035.2 1926.3L1037.1 1852.8L1039.1 1924.5L1041.1 1957.5L1043.0 1949.6L1045.0 1916.0L1047.0 1901.9L1048.9 1870.8L1050.9 1852.8L1052.9 1926.9L1054.8 1906.5L1056.8 1937.3L1058.8 1896.4L1060.8 1931.7L1062.7 1890.4L1064.7 1915.4L1066.7 1949.4L1068.6 1951.2L1070.6 1881.1L1072.6 1871.7L1074.5 1909.9L1076.5 1818.4L1078.5 1913.5L1080.4 1921.2L1082.4 1933.5L1084.4 1914.6L1086.4 1929.9L1088.3 1910.6L1090.3 1928.5L1092.3 1913.6L1094.2 1879.3L1096.2 1926.6L1098.2 1935.8L1100.1 1950.1L1102.1 1898.9L1104.1 1931.5L1106.0 1852.8L1108.0 1919.2L1110.0 1920.7L1111.9 1912.2L1113.9 1900.7L1115.9 1905.9L1117.9 1924.6L1119.8 1918.7L1121.8 1928.3L1123.8 1917.3L1125.7 1974.3L1127.7 1885.4L1129.7 1913.4L1131.6 1943.5L1133.6 1873.8L1135.6 1921.3L1137.5 1930.0L1139.5 1901.9L1141.5 1910.3L1143.4 1947.7L1145.4 1909.4L1147.4 1893.3L1149.4 1923.0L1151.3 1914.5L1153.3 1947.1L1155.3 1874.3L1157.2 1902.2L1159.2 1882.3L1161.2 1874.3L1163.1 1899.5L1165.1 1930.1L1167.1 1900.3L1169.0 1910.5L1171.0 1835.4L1173.0 1914.7L1175.0 1952.9L1176.9 1897.0L1178.9 1881.3L1180.9 1917.7L1182.8 1951.7L1184.8 1927.7L1186.8 1958.2L1188.7 1870.5L1190.7 1951.2L1192.7 1870.9L1194.6 1934.1L1196.6 1883.4L1198.6 1941.7L1200.5 1923.6L1202.5 1870.5L1204.5 1921.1L1206.5 1912.7L1208.4 1873.7L1210.4 1909.8L1212.4 1918.8L1214.3 1910.0L1216.3 1884.8L1218.3 1926.7L1220.2 1951.6L1222.2 1933.8L1224.2 1922.6L1226.1 1800.7L1228.1 1766.7L1230.1 1883.1L1232.0 1815.8L1234.0 1924.6L1236.0 1919.3L1238.0 1928.8L1239.9 1884.0L1241.9 1907.4L1243.9 1918.1L1245.8 1916.6L1247.8 1902.4L1249.8 1926.1L1251.7 1929.0L1253.7 1918.3L1255.7 1873.4L1257.6 1939.4L1259.6 1809.4L1261.6 1936.6L1263.6 1974.3L1265.5 1926.3L1267.5 1949.9L1269.5 1876.2L1271.4 1894.6L1273.4 1878.8L1275.4 1920.4L1277.3 1925.0L1279.3 1940.8L1281.3 1909.4L1283.2 1918.1L1285.2 1914.1L1287.2 1912.1L1289.1 1895.1L1291.1 1914.6L1293.1 1945.9L1295.1 1901.8L1297.0 1913.1L1299.0 1922.1L1301.0 1949.0L1302.9 1946.8L1304.9 1928.9L1306.9 1943.8L1308.8 1923.6L1310.8 1923.2L1312.8 1912.2L1314.7 1917.8L1316.7 1939.9L1318.7 1933.2L1320.6 1915.6L1322.6 1929.9L1324.6 1891.6L1326.6 1885.0L1328.5 1896.3L1330.5 1852.8L1332.5 1946.5L1334.4 1930.4L1336.4 1890.5L1338.4 1880.4L1340.3 1942.3L1342.3 1897.0L1344.3 1945.2L1346.2 1940.3L1348.2 1922.5L1350.2 1852.8L1352.2 1954.3L1354.1 1911.3L1356.1 1912.0L1358.1 1920.1L1360.0 1874.2L1362.0 1954.4L1364.0 1911.3L1365.9 1901.6L1367.9 1883.5L1369.9 1892.8L1371.8 1801.5L1373.8 1801.5L1375.8 1953.3L1377.7 1908.8L1379.7 1896.3L1381.7 1953.0L1383.7 1937.4L1385.6 1893.4L1387.6 1940.8L1389.6 1902.2L1391.5 1907.4L1393.5 1910.9L1395.5 1835.4L1397.4 1948.2L1399.4 1880.5L1401.4 1900.8L1403.3 1882.3L1405.3 1852.8L1407.3 1927.2L1409.2 1890.5L1411.2 1947.7L1413.2 1939.4L1415.2 1927.6L1417.1 1920.3L1419.1 1899.9L1421.1 1945.9L1423.0 1884.0L1425.0 1835.4L1427.0 1890.2L1428.9 1937.1L1430.9 1926.7L1432.9 1886.8L1434.8 1930.5L1436.8 1936.1L1438.8 1957.4L1440.8 1919.5L1442.7 1951.9L1444.7 1887.7L1446.7 1911.6L1448.6 1924.1L1450.6 1919.3L1452.6 1936.0L1454.5 1852.8L1456.5 1917.0L1458.5 1938.4L1460.4 1898.5L1462.4 1905.6L1464.4 1944.4L1466.3 1917.2L1468.3 1880.8L1470.3 1902.9L1472.3 1915.7L1474.2 1920.5L1476.2 1909.0L1478.2 1930.9L1480.1 1744.1L1482.1 1680.0L1484.1 1912.8L1486.0 1953.1L1488.0 1931.9L1490.0 1870.5L1491.9 1882.7L1493.9 1930.7L1495.9 1953.9L1497.8 1925.3L1499.8 1894.8L1501.8 1939.9L1503.8 1918.6L1505.7 1899.6L1507.7 1918.6L1509.7 1888.2L1511.6 1927.6L1513.6 1847.2L1515.6 1840.3L1517.5 1845.3L1519.5 1861.0L1521.5 1783.7L1523.4 1885.3L1525.4 1837.4L1527.4 1841.4L1529.4 1860.0L1531.3 1783.7L1533.3 1861.9L1535.3 1812.7L1537.2 1847.1L1539.2 1803.4L1541.2 1841.2L1543.1 1837.2L1545.1 1835.9L1547.1 1867.6L1549.0 1833.0L1551.0 1797.6L1553.0 1766.7L1554.9 1912.9L1556.9 1841.0L1558.9 1805.3L1560.9 1841.4L1562.8 1883.6L1564.8 1843.4L1566.8 1855.3L1568.7 1792.4L1570.7 1877.6L1572.7 1866.2L1574.6 1821.8L1576.6 1872.5L1578.6 1947.5L1580.5 1892.4L1582.5 1884.5L1584.5 1882.6L1586.4 1941.1L1588.4 1926.7L1590.4 1941.9L1592.4 1974.3L1594.3 1922.8L1596.3 1887.2L1598.3 1917.3L1600.2 1874.7L1602.2 1937.8L1604.2 1680.0L1606.1 1885.0L1608.1 1927.4L1610.1 1927.2L1612.0 1909.8L1614.0 1921.7L1616.0 1920.2L1618.0 1899.1L1619.9 1891.2L1621.9 1919.1L1623.9 1948.1L1625.8 1896.1L1627.8 1908.3L1629.8 1920.4L1631.7 1706.4L1633.7 1931.9L1635.7 1917.9L1637.6 1872.0L1639.6 1952.0L1641.6 1921.4L1643.5 1884.1L1645.5 1890.3L1647.5 1951.6L1649.5 1898.1L1651.4 1951.1L1653.4 1942.4L1655.4 1923.3L1657.3 1953.7L1659.3 1835.4L1661.3 1917.0L1663.2 1919.1L1665.2 1891.5L1667.2 1916.8L1669.1 1886.6L1671.1 1927.0L1673.1 1909.4L1675.0 1874.2L1677.0 1954.0L1679.0 1818.4L1681.0 1914.0L1682.9 1923.0L1684.9 1917.6L1686.9 1913.7L1688.8 1924.2L1690.8 1959.7L1692.8 1882.3L1694.7 1951.3L1696.7 1882.9L1698.7 1915.2L1700.6 1930.0L1702.6 1930.4L1704.6 1870.5L1706.6 1936.3L1708.5 1916.7L1710.5 1919.5L1712.5 1907.0L1714.4 1906.7L1716.4 1918.3L1718.4 1941.6L1720.3 1887.7L1722.3 1870.5L1724.3 1928.0L1726.2 1905.3L1728.2 1917.6L1730.2 1925.4L1732.1 1766.7L1734.1 1901.1L1736.1 1755.4L1738.1 1732.8L1740.0 1901.6L1742.0 1912.8L1744.0 1974.3L1745.9 1870.5L1747.9 1893.8L1749.9 1926.1L1751.8 1884.9L1753.8 1929.2L1755.8 1920.8L1757.7 1919.5L1759.7 1934.5L1761.7 1915.4L1763.6 1901.8L1765.6 1956.7L1767.6 1913.0L1769.6 1897.0L1771.5 1912.7L1773.5 1933.2L1775.5 1870.7L1777.4 1882.4L1779.4 1922.3L1781.4 1928.2L1783.3 1852.8L1785.3 1950.9L1787.3 1950.3L1789.2 1920.4L1791.2 1898.8L1793.2 1926.7L1795.2 1872.3L1797.1 1920.1L1799.1 1974.3L1801.1 1927.5L1803.0 1943.1L1805.0 1937.4L1807.0 1882.4L1808.9 1916.7L1810.9 1931.1L1812.9 1912.2L1814.8 1924.8L1816.8 1884.1L1818.8 1956.9L1820.7 1956.4L1822.7 1945.0L1824.7 1818.4L1826.7 1930.6L1828.6 1889.3L1830.6 1946.3L1832.6 1928.2L1834.5 1952.5L1836.5 1920.9L1838.5 1873.8L1840.4 1945.8L1842.4 1870.5L1844.4 1910.4L1846.3 1925.9L1848.3 1922.7L1850.3 1891.1L1852.2 1953.2L1854.2 1852.8L1856.2 1902.5L1858.2 1861.1L1860.1 1928.9L1862.1 1952.0L1864.1 1912.2L1866.0 1888.5L1868.0 1914.8" fill="none" stroke="#85bd72" stroke-width="2" stroke-linejoin="round"/><text x="43.12" y="1706.08" font-size="25" fill="#ccccdb" stroke="#ccccdb" stroke-width="0.25" stroke-linejoin="round" textLength="41.61" lengthAdjust="spacingAndGlyphs">140</text><text x="43.12" y="1787.58" font-size="25" fill="#ccccdb" stroke="#ccccdb" stroke-width="0.25" stroke-linejoin="round" textLength="41.61" lengthAdjust="spacingAndGlyphs">120</text><text x="43.12" y="1869.08" font-size="25" fill="#ccccdb" stroke="#ccccdb" stroke-width="0.25" stroke-linejoin="round" textLength="41.61" lengthAdjust="spacingAndGlyphs">100</text><text x="54.89" y="1950.58" font-size="25" fill="#ccccdb" stroke="#ccccdb" stroke-width="0.25" stroke-linejoin="round" textLength="29.80" lengthAdjust="spacingAndGlyphs">80</text><text x="140.51" y="2045.38" font-size="25" fill="#ccccdb" stroke="#ccccdb" stroke-width="0.25" stroke-linejoin="round" textLength="139.73" lengthAdjust="spacingAndGlyphs">12/03 00:00</text><text x="393.45" y="2045.38" font-size="25" fill="#ccccdb" stroke="#ccccdb" stroke-width="0.25" stroke-linejoin="round" textLength="140.76" lengthAdjust="spacingAndGlyphs">12/04 00:00</text><text x="646.38" y="2045.38" font-size="25" fill="#ccccdb" stroke="#ccccdb" stroke-width="0.25" stroke-linejoin="round" textLength="140.75" lengthAdjust="spacingAndGlyphs">12/05 00:00</text><text x="899.32" y="2045.38" font-size="25" fill="#ccccdb" stroke="#ccccdb" stroke-width="0.25" stroke-linejoin="round" textLength="140.77" lengthAdjust="spacingAndGlyphs">12/06 00:00</text><text x="1152.24" y="2045.38" font-size="25" fill="#ccccdb" stroke="#ccccdb" stroke-width="0.25" stroke-linejoin="round" textLength="140.77" lengthAdjust="spacingAndGlyphs">12/07 00:00</text><text x="1406.16" y="2045.38" font-size="25" fill="#ccccdb" stroke="#ccccdb" stroke-width="0.25" stroke-linejoin="round" textLength="139.76" lengthAdjust="spacingAndGlyphs">12/08 00:00</text><text x="1659.13" y="2045.38" font-size="25" fill="#ccccdb" stroke="#ccccdb" stroke-width="0.25" stroke-linejoin="round" textLength="140.76" lengthAdjust="spacingAndGlyphs">12/09 00:00</text><rect x="44" y="2082.6" width="28" height="8" rx="4" fill="#85bd72"/><text x="87.36" y="2094.68" font-size="25" fill="#ccccdb" stroke="#ccccdb" stroke-width="0.25" stroke-linejoin="round" textLength="42.06" lengthAdjust="spacingAndGlyphs">ups</text><text x="145.70" y="2094.68" font-size="25" fill="#ccccdb" stroke="#ccccdb" stroke-width="0.25" stroke-linejoin="round" textLength="123.84" lengthAdjust="spacingAndGlyphs">Last *: 87.1</text><path d="M1880.6 2127.8L1897.8 2110.6M1890.0 2127.8L1897.8 2120.0" stroke="#53555b" stroke-width="2.4" stroke-linecap="round" fill="none"/></svg></section>
<section class="panel " style="left:1918px;top:1540px;width:1884px;height:592px"><svg width="1884" height="592" viewBox="1918 1540 1884 592"><text x="1937.49" y="1583.90" font-size="28.2" fill="#ccccdb" stroke="#ccccdb" stroke-width="1.0" stroke-linejoin="round" textLength="256.51" lengthAdjust="spacingAndGlyphs">Average Daily Cost</text><rect x="2136" y="1638" width="1" height="378" fill="rgba(240,250,255,0.09)"/><rect x="2385" y="1638" width="1" height="378" fill="rgba(240,250,255,0.09)"/><rect x="2635" y="1638" width="1" height="378" fill="rgba(240,250,255,0.09)"/><rect x="2884" y="1638" width="1" height="378" fill="rgba(240,250,255,0.09)"/><rect x="3134" y="1638" width="1" height="378" fill="rgba(240,250,255,0.09)"/><rect x="3383" y="1638" width="1" height="378" fill="rgba(240,250,255,0.09)"/><rect x="3632" y="1638" width="1" height="378" fill="rgba(240,250,255,0.09)"/><rect x="2022" y="1638" width="1746" height="1" fill="rgba(240,250,255,0.09)"/><rect x="2022" y="1704" width="1746" height="1" fill="rgba(240,250,255,0.09)"/><rect x="2022" y="1770" width="1746" height="1" fill="rgba(240,250,255,0.09)"/><rect x="2022" y="1836" width="1746" height="1" fill="rgba(240,250,255,0.09)"/><rect x="2022" y="1902" width="1746" height="1" fill="rgba(240,250,255,0.09)"/><rect x="2022" y="1968" width="1746" height="1" fill="rgba(240,250,255,0.09)"/><path d="M2022.0 1847.4L2136.3 1972.8L2385.7 1956.8L2635.2 1899.0L2884.6 1918.8L3134.0 1901.9L3383.5 1876.2L3632.9 1677.8" fill="none" stroke="#85bd72" stroke-width="2" stroke-linejoin="round"/><circle cx="2136.3" cy="1972.8" r="4.6" fill="#85bd72"/><circle cx="2385.7" cy="1956.8" r="4.6" fill="#85bd72"/><circle cx="2635.2" cy="1899.0" r="4.6" fill="#85bd72"/><circle cx="2884.6" cy="1918.8" r="4.6" fill="#85bd72"/><circle cx="3134.0" cy="1901.9" r="4.6" fill="#85bd72"/><circle cx="3383.5" cy="1876.2" r="4.6" fill="#85bd72"/><circle cx="3632.9" cy="1677.8" r="4.6" fill="#85bd72"/><text x="1944.05" y="1645.38" font-size="25" fill="#ccccdb" stroke="#ccccdb" stroke-width="0.25" stroke-linejoin="round" textLength="68.06" lengthAdjust="spacingAndGlyphs">£0.49</text><text x="1944.05" y="1711.28" font-size="25" fill="#ccccdb" stroke="#ccccdb" stroke-width="0.25" stroke-linejoin="round" textLength="68.06" lengthAdjust="spacingAndGlyphs">£0.48</text><text x="1944.05" y="1777.17" font-size="25" fill="#ccccdb" stroke="#ccccdb" stroke-width="0.25" stroke-linejoin="round" textLength="68.06" lengthAdjust="spacingAndGlyphs">£0.48</text><text x="1944.05" y="1843.08" font-size="25" fill="#ccccdb" stroke="#ccccdb" stroke-width="0.25" stroke-linejoin="round" textLength="68.06" lengthAdjust="spacingAndGlyphs">£0.47</text><text x="1944.05" y="1908.97" font-size="25" fill="#ccccdb" stroke="#ccccdb" stroke-width="0.25" stroke-linejoin="round" textLength="68.06" lengthAdjust="spacingAndGlyphs">£0.47</text><text x="1944.05" y="1974.88" font-size="25" fill="#ccccdb" stroke="#ccccdb" stroke-width="0.25" stroke-linejoin="round" textLength="68.06" lengthAdjust="spacingAndGlyphs">£0.46</text><text x="2064.81" y="2045.38" font-size="25" fill="#ccccdb" stroke="#ccccdb" stroke-width="0.25" stroke-linejoin="round" textLength="139.74" lengthAdjust="spacingAndGlyphs">12/03 00:00</text><text x="2313.82" y="2045.38" font-size="25" fill="#ccccdb" stroke="#ccccdb" stroke-width="0.25" stroke-linejoin="round" textLength="140.76" lengthAdjust="spacingAndGlyphs">12/04 00:00</text><text x="2562.86" y="2045.38" font-size="25" fill="#ccccdb" stroke="#ccccdb" stroke-width="0.25" stroke-linejoin="round" textLength="140.76" lengthAdjust="spacingAndGlyphs">12/05 00:00</text><text x="2812.89" y="2045.38" font-size="25" fill="#ccccdb" stroke="#ccccdb" stroke-width="0.25" stroke-linejoin="round" textLength="140.77" lengthAdjust="spacingAndGlyphs">12/06 00:00</text><text x="3061.92" y="2045.38" font-size="25" fill="#ccccdb" stroke="#ccccdb" stroke-width="0.25" stroke-linejoin="round" textLength="140.78" lengthAdjust="spacingAndGlyphs">12/07 00:00</text><text x="3311.96" y="2045.38" font-size="25" fill="#ccccdb" stroke="#ccccdb" stroke-width="0.25" stroke-linejoin="round" textLength="139.74" lengthAdjust="spacingAndGlyphs">12/08 00:00</text><text x="3560.98" y="2045.38" font-size="25" fill="#ccccdb" stroke="#ccccdb" stroke-width="0.25" stroke-linejoin="round" textLength="140.74" lengthAdjust="spacingAndGlyphs">12/09 00:00</text><rect x="1944" y="2082.6" width="28" height="8" rx="4" fill="#85bd72"/><text x="1988.40" y="2094.68" font-size="25" fill="#ccccdb" stroke="#ccccdb" stroke-width="0.25" stroke-linejoin="round" textLength="638.70" lengthAdjust="spacingAndGlyphs">{instance=&quot;192.168.99.31:3493&quot;, job=&quot;nut&quot;, ups=&quot;ups&quot;}</text><path d="M3780.6 2127.8L3797.8 2110.6M3790.0 2127.8L3797.8 2120.0" stroke="#53555b" stroke-width="2.4" stroke-linecap="round" fill="none"/></svg></section>
</main></body></html>
